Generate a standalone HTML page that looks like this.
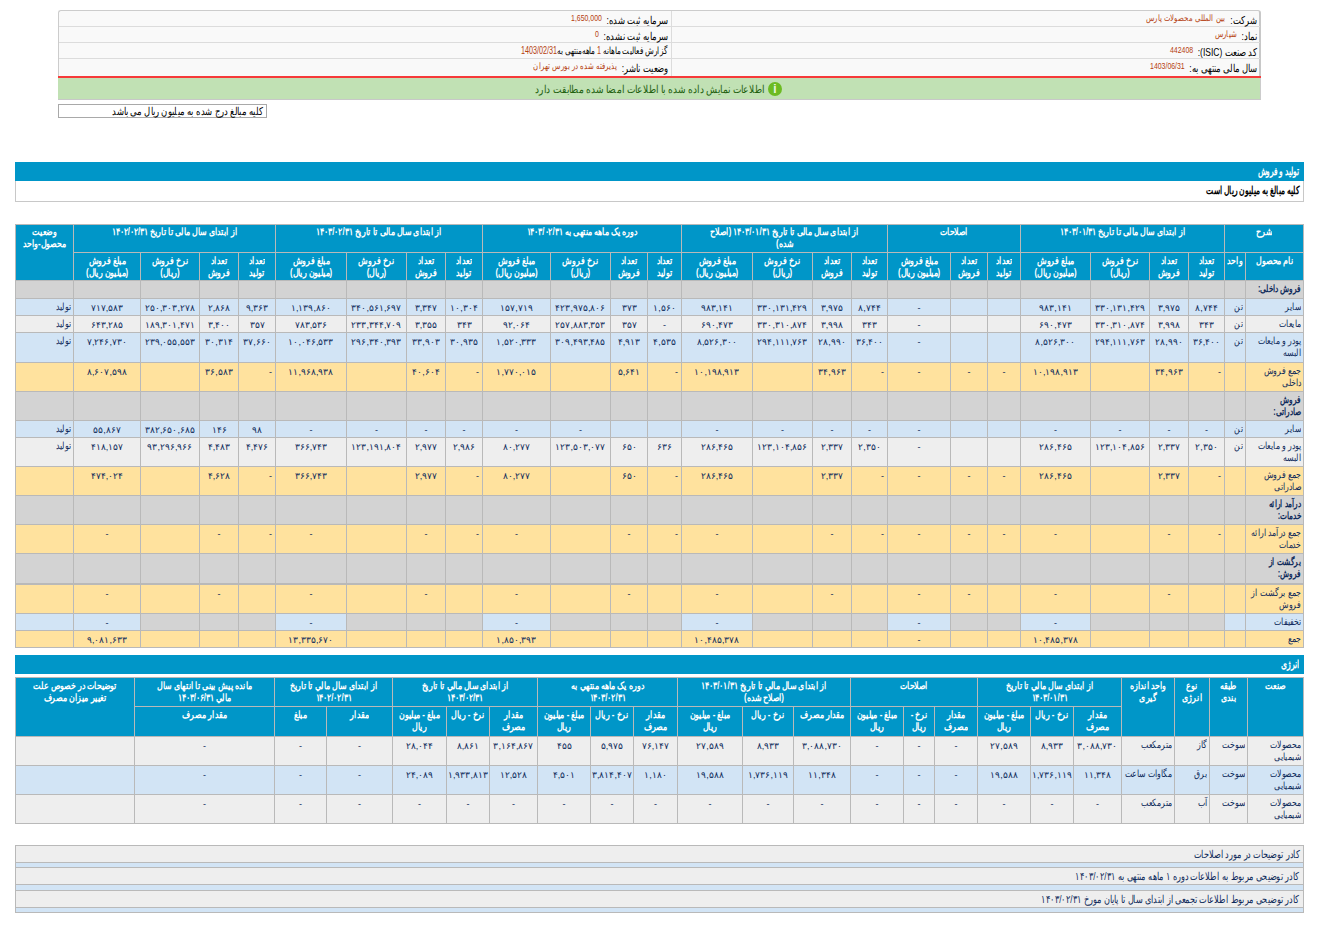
<!DOCTYPE html>
<html lang="fa" dir="ltr"><head><meta charset="utf-8"><title>Codal</title>
<style>
html,body{margin:0;padding:0;background:#fff;width:1324px;height:936px;overflow:hidden}
body{font-family:"Liberation Sans",sans-serif;font-size:11px;color:#000;position:relative}
.c{position:absolute;box-sizing:border-box;border:1px solid #b9b9b9;overflow:hidden}
.t{position:absolute;direction:rtl;white-space:nowrap}
.t span{display:inline-block;white-space:nowrap}
.b{position:absolute;box-sizing:border-box}
.s{display:inline-block;white-space:nowrap}
.sq{display:inline-block;white-space:nowrap;transform:scaleX(.77)}
.inf{position:absolute;direction:rtl;white-space:nowrap;height:15px;line-height:15px;transform:scaleX(.77);transform-origin:100% 50%}
.lab{font-size:11px;color:#000}
.lab2{font-size:10px;color:#000}
.val{font-size:9px;color:#b5400f;margin-right:6px;vertical-align:3px}
.br{font-weight:normal;color:#b5400f}
.dsc{left:15px;width:1289px;background:#eeeeee;border:1px solid #b9b9b9;direction:rtl;text-align:right;white-space:nowrap;padding-right:4px;line-height:16px;font-size:11px;color:#0f2b5b}
</style></head><body>
<!-- header info box -->
<div class="b" style="left:58px;top:10px;width:1203px;height:67px;background:#f9f9f9;border:1px solid #cccccc;border-right:2px solid #c8c8c8;border-bottom:none;border-radius:3px 3px 0 0"></div>
<div class="b" style="left:59px;top:26px;width:1201px;height:1px;background:#dcdcdc"></div>
<div class="b" style="left:59px;top:42px;width:1201px;height:1px;background:#dcdcdc"></div>
<div class="b" style="left:59px;top:58px;width:1201px;height:1px;background:#dcdcdc"></div>
<div class="b" style="left:671px;top:11px;width:1px;height:65px;background:#dcdcdc"></div>
<div class="b" style="left:58px;top:76px;width:1203px;height:2px;background:#f63a3a"></div>
<div class="b" style="left:58px;top:78px;width:1203px;height:22px;background:#c1e1b4;border-bottom:1px solid #c8c8c8;border-right:1px solid #cccccc"></div>
<!-- info texts right column -->
<div class="inf" style="right:67px;top:11px"><span class="lab">شرکت:</span><span class="val">بین المللی محصولات پارس</span></div>
<div class="inf" style="right:67px;top:27px"><span class="lab">نماد:</span><span class="val">شپارس</span></div>
<div class="inf" style="right:67px;top:43px"><span class="lab">کد صنعت (ISIC):</span><span class="val">442408</span></div>
<div class="inf" style="right:67px;top:59px"><span class="lab">سال مالی منتهی به:</span><span class="val">1403/06/31</span></div>
<!-- info texts left column -->
<div class="inf" style="right:656px;top:11px"><span class="lab">سرمایه ثبت شده:</span><span class="val">1,650,000</span></div>
<div class="inf" style="right:656px;top:27px"><span class="lab">سرمایه ثبت نشده:</span><span class="val">0</span></div>
<div class="inf" style="right:656px;top:43px;transform:scaleX(.72)"><span class="lab2">گزارش فعالیت ماهانه <b class="br">1</b> ماهه‌منتهی به<b class="br">1403/02/31</b></span></div>
<div class="inf" style="right:656px;top:59px"><span class="lab">وضعیت ناشر:</span><span class="val">پذیرفته شده در بورس تهران</span></div>
<!-- green message -->
<div class="b" style="left:437px;top:81px;width:328px;height:16px;line-height:16px;color:#22600f;font-size:11px;direction:rtl;text-align:right;white-space:nowrap"><span class="sq" style="transform-origin:100% 50%;transform:scaleX(.82)">اطلاعات نمایش داده شده با اطلاعات امضا شده مطابقت دارد</span></div>
<div class="b" style="left:768px;top:82px;width:14px;height:14px;border-radius:50%;background:#6cbb22;color:#eef8e4;font-weight:bold;font-size:12px;line-height:14px;text-align:center">i</div>
<!-- amounts note input -->
<div class="b" style="left:58px;top:104px;width:209px;height:14px;border:1px solid #a9a9a9;background:#fff;direction:rtl;text-align:right;white-space:nowrap;font-size:11px;line-height:12px;padding-right:4px;color:#000"><span class="sq" style="transform-origin:100% 50%">کلیه مبالغ درج شده به میلیون ریال می باشد</span></div>
<!-- section bar production & sales -->
<div class="b" style="left:15px;top:162px;width:1289px;height:19px;background:#0096c8;color:#fff;font-weight:bold;direction:rtl;text-align:right;white-space:nowrap;padding-right:5px;line-height:19px;font-size:11px"><span class="sq" style="transform-origin:100% 50%;transform:scaleX(.68)">تولید و فروش</span></div>
<div class="b" style="left:15px;top:181px;width:1289px;height:21px;background:#fff;border:1px solid #c8c8c8;border-top:none;color:#000;font-weight:bold;direction:rtl;text-align:right;white-space:nowrap;padding-right:4px;line-height:19px;font-size:11px"><span class="sq" style="transform-origin:100% 50%;transform:scaleX(.69)">کلیه مبالغ به میلیون ریال است</span></div>

<div class="c" style="left:1224px;top:224px;width:80px;height:29px;background:#0096c8;border-color:#b9b9b9"><div class="t" style="left:-300px;right:-300px;text-align:center;transform-origin:50% 0;transform:scaleX(0.79);top:1px;line-height:12px;font-size:10px;font-weight:bold;color:#fff">شرح</div></div>
<div class="c" style="left:1020px;top:224px;width:205px;height:29px;background:#0096c8;border-color:#b9b9b9"><div class="t" style="left:-300px;right:-300px;text-align:center;transform-origin:50% 0;transform:scaleX(0.79);top:1px;line-height:12px;font-size:10px;font-weight:bold;color:#fff">از ابتدای سال مالی تا تاریخ ۱۴۰۳/۰۱/۳۱</div></div>
<div class="c" style="left:887px;top:224px;width:134px;height:29px;background:#0096c8;border-color:#b9b9b9"><div class="t" style="left:-300px;right:-300px;text-align:center;transform-origin:50% 0;transform:scaleX(0.79);top:1px;line-height:12px;font-size:10px;font-weight:bold;color:#fff">اصلاحات</div></div>
<div class="c" style="left:681px;top:224px;width:207px;height:29px;background:#0096c8;border-color:#b9b9b9"><div class="t" style="left:-300px;right:-300px;text-align:center;transform-origin:50% 0;transform:scaleX(0.79);top:1px;line-height:12px;font-size:10px;font-weight:bold;color:#fff">از ابتدای سال مالی تا تاریخ ۱۴۰۳/۰۱/۳۱ (اصلاح<br>شده)</div></div>
<div class="c" style="left:482px;top:224px;width:200px;height:29px;background:#0096c8;border-color:#b9b9b9"><div class="t" style="left:-300px;right:-300px;text-align:center;transform-origin:50% 0;transform:scaleX(0.79);top:1px;line-height:12px;font-size:10px;font-weight:bold;color:#fff">دوره یک ماهه منتهی به ۱۴۰۳/۰۲/۳۱</div></div>
<div class="c" style="left:275px;top:224px;width:208px;height:29px;background:#0096c8;border-color:#b9b9b9"><div class="t" style="left:-300px;right:-300px;text-align:center;transform-origin:50% 0;transform:scaleX(0.79);top:1px;line-height:12px;font-size:10px;font-weight:bold;color:#fff">از ابتدای سال مالی تا تاریخ ۱۴۰۳/۰۲/۳۱</div></div>
<div class="c" style="left:73px;top:224px;width:203px;height:29px;background:#0096c8;border-color:#b9b9b9"><div class="t" style="left:-300px;right:-300px;text-align:center;transform-origin:50% 0;transform:scaleX(0.79);top:1px;line-height:12px;font-size:10px;font-weight:bold;color:#fff">از ابتدای سال مالی تا تاریخ ۱۴۰۲/۰۲/۳۱</div></div>
<div class="c" style="left:15px;top:224px;width:59px;height:57px;background:#0096c8;border-color:#b9b9b9"><div class="t" style="left:-300px;right:-300px;text-align:center;transform-origin:50% 0;transform:scaleX(0.79);top:1px;line-height:12px;font-size:10px;font-weight:bold;color:#fff">وضعیت<br>محصول-واحد</div></div>
<div class="c" style="left:1245px;top:252px;width:59px;height:29px;background:#0096c8;border-color:#b9b9b9"><div class="t" style="left:-300px;right:-300px;text-align:center;transform-origin:50% 0;transform:scaleX(0.79);top:2px;line-height:12px;font-size:10px;font-weight:bold;color:#fff">نام محصول</div></div>
<div class="c" style="left:1224px;top:252px;width:22px;height:29px;background:#0096c8;border-color:#b9b9b9"><div class="t" style="left:-300px;right:-300px;text-align:center;transform-origin:50% 0;transform:scaleX(0.79);top:2px;line-height:12px;font-size:10px;font-weight:bold;color:#fff">واحد</div></div>
<div class="c" style="left:1188px;top:252px;width:37px;height:29px;background:#0096c8;border-color:#b9b9b9"><div class="t" style="left:-300px;right:-300px;text-align:center;transform-origin:50% 0;transform:scaleX(0.79);top:2px;line-height:12px;font-size:10px;font-weight:bold;color:#fff">تعداد<br>تولید</div></div>
<div class="c" style="left:1149px;top:252px;width:40px;height:29px;background:#0096c8;border-color:#b9b9b9"><div class="t" style="left:-300px;right:-300px;text-align:center;transform-origin:50% 0;transform:scaleX(0.79);top:2px;line-height:12px;font-size:10px;font-weight:bold;color:#fff">تعداد<br>فروش</div></div>
<div class="c" style="left:1090px;top:252px;width:60px;height:29px;background:#0096c8;border-color:#b9b9b9"><div class="t" style="left:-300px;right:-300px;text-align:center;transform-origin:50% 0;transform:scaleX(0.79);top:2px;line-height:12px;font-size:10px;font-weight:bold;color:#fff">نرخ فروش<br>(ريال)</div></div>
<div class="c" style="left:1020px;top:252px;width:71px;height:29px;background:#0096c8;border-color:#b9b9b9"><div class="t" style="left:-300px;right:-300px;text-align:center;transform-origin:50% 0;transform:scaleX(0.79);top:2px;line-height:12px;font-size:10px;font-weight:bold;color:#fff">مبلغ فروش<br>(میلیون ريال)</div></div>
<div class="c" style="left:987px;top:252px;width:34px;height:29px;background:#0096c8;border-color:#b9b9b9"><div class="t" style="left:-300px;right:-300px;text-align:center;transform-origin:50% 0;transform:scaleX(0.79);top:2px;line-height:12px;font-size:10px;font-weight:bold;color:#fff">تعداد<br>تولید</div></div>
<div class="c" style="left:950px;top:252px;width:38px;height:29px;background:#0096c8;border-color:#b9b9b9"><div class="t" style="left:-300px;right:-300px;text-align:center;transform-origin:50% 0;transform:scaleX(0.79);top:2px;line-height:12px;font-size:10px;font-weight:bold;color:#fff">تعداد<br>فروش</div></div>
<div class="c" style="left:887px;top:252px;width:64px;height:29px;background:#0096c8;border-color:#b9b9b9"><div class="t" style="left:-300px;right:-300px;text-align:center;transform-origin:50% 0;transform:scaleX(0.79);top:2px;line-height:12px;font-size:10px;font-weight:bold;color:#fff">مبلغ فروش<br>(میلیون ريال)</div></div>
<div class="c" style="left:851px;top:252px;width:37px;height:29px;background:#0096c8;border-color:#b9b9b9"><div class="t" style="left:-300px;right:-300px;text-align:center;transform-origin:50% 0;transform:scaleX(0.79);top:2px;line-height:12px;font-size:10px;font-weight:bold;color:#fff">تعداد<br>تولید</div></div>
<div class="c" style="left:812px;top:252px;width:40px;height:29px;background:#0096c8;border-color:#b9b9b9"><div class="t" style="left:-300px;right:-300px;text-align:center;transform-origin:50% 0;transform:scaleX(0.79);top:2px;line-height:12px;font-size:10px;font-weight:bold;color:#fff">تعداد<br>فروش</div></div>
<div class="c" style="left:752px;top:252px;width:61px;height:29px;background:#0096c8;border-color:#b9b9b9"><div class="t" style="left:-300px;right:-300px;text-align:center;transform-origin:50% 0;transform:scaleX(0.79);top:2px;line-height:12px;font-size:10px;font-weight:bold;color:#fff">نرخ فروش<br>(ريال)</div></div>
<div class="c" style="left:681px;top:252px;width:72px;height:29px;background:#0096c8;border-color:#b9b9b9"><div class="t" style="left:-300px;right:-300px;text-align:center;transform-origin:50% 0;transform:scaleX(0.79);top:2px;line-height:12px;font-size:10px;font-weight:bold;color:#fff">مبلغ فروش<br>(میلیون ريال)</div></div>
<div class="c" style="left:647px;top:252px;width:35px;height:29px;background:#0096c8;border-color:#b9b9b9"><div class="t" style="left:-300px;right:-300px;text-align:center;transform-origin:50% 0;transform:scaleX(0.79);top:2px;line-height:12px;font-size:10px;font-weight:bold;color:#fff">تعداد<br>تولید</div></div>
<div class="c" style="left:610px;top:252px;width:38px;height:29px;background:#0096c8;border-color:#b9b9b9"><div class="t" style="left:-300px;right:-300px;text-align:center;transform-origin:50% 0;transform:scaleX(0.79);top:2px;line-height:12px;font-size:10px;font-weight:bold;color:#fff">تعداد<br>فروش</div></div>
<div class="c" style="left:550px;top:252px;width:61px;height:29px;background:#0096c8;border-color:#b9b9b9"><div class="t" style="left:-300px;right:-300px;text-align:center;transform-origin:50% 0;transform:scaleX(0.79);top:2px;line-height:12px;font-size:10px;font-weight:bold;color:#fff">نرخ فروش<br>(ريال)</div></div>
<div class="c" style="left:482px;top:252px;width:69px;height:29px;background:#0096c8;border-color:#b9b9b9"><div class="t" style="left:-300px;right:-300px;text-align:center;transform-origin:50% 0;transform:scaleX(0.79);top:2px;line-height:12px;font-size:10px;font-weight:bold;color:#fff">مبلغ فروش<br>(میلیون ريال)</div></div>
<div class="c" style="left:445px;top:252px;width:38px;height:29px;background:#0096c8;border-color:#b9b9b9"><div class="t" style="left:-300px;right:-300px;text-align:center;transform-origin:50% 0;transform:scaleX(0.79);top:2px;line-height:12px;font-size:10px;font-weight:bold;color:#fff">تعداد<br>تولید</div></div>
<div class="c" style="left:406px;top:252px;width:40px;height:29px;background:#0096c8;border-color:#b9b9b9"><div class="t" style="left:-300px;right:-300px;text-align:center;transform-origin:50% 0;transform:scaleX(0.79);top:2px;line-height:12px;font-size:10px;font-weight:bold;color:#fff">تعداد<br>فروش</div></div>
<div class="c" style="left:346px;top:252px;width:61px;height:29px;background:#0096c8;border-color:#b9b9b9"><div class="t" style="left:-300px;right:-300px;text-align:center;transform-origin:50% 0;transform:scaleX(0.79);top:2px;line-height:12px;font-size:10px;font-weight:bold;color:#fff">نرخ فروش<br>(ريال)</div></div>
<div class="c" style="left:275px;top:252px;width:72px;height:29px;background:#0096c8;border-color:#b9b9b9"><div class="t" style="left:-300px;right:-300px;text-align:center;transform-origin:50% 0;transform:scaleX(0.79);top:2px;line-height:12px;font-size:10px;font-weight:bold;color:#fff">مبلغ فروش<br>(میلیون ريال)</div></div>
<div class="c" style="left:238px;top:252px;width:38px;height:29px;background:#0096c8;border-color:#b9b9b9"><div class="t" style="left:-300px;right:-300px;text-align:center;transform-origin:50% 0;transform:scaleX(0.79);top:2px;line-height:12px;font-size:10px;font-weight:bold;color:#fff">تعداد<br>تولید</div></div>
<div class="c" style="left:199px;top:252px;width:40px;height:29px;background:#0096c8;border-color:#b9b9b9"><div class="t" style="left:-300px;right:-300px;text-align:center;transform-origin:50% 0;transform:scaleX(0.79);top:2px;line-height:12px;font-size:10px;font-weight:bold;color:#fff">تعداد<br>فروش</div></div>
<div class="c" style="left:140px;top:252px;width:60px;height:29px;background:#0096c8;border-color:#b9b9b9"><div class="t" style="left:-300px;right:-300px;text-align:center;transform-origin:50% 0;transform:scaleX(0.79);top:2px;line-height:12px;font-size:10px;font-weight:bold;color:#fff">نرخ فروش<br>(ريال)</div></div>
<div class="c" style="left:73px;top:252px;width:68px;height:29px;background:#0096c8;border-color:#b9b9b9"><div class="t" style="left:-300px;right:-300px;text-align:center;transform-origin:50% 0;transform:scaleX(0.79);top:2px;line-height:12px;font-size:10px;font-weight:bold;color:#fff">مبلغ فروش<br>(میلیون ريال)</div></div>
<div class="c" style="left:1245px;top:280px;width:59px;height:19px;background:#d3d3d3;border-color:#b9b9b9"><div class="t" style="left:-600px;right:2px;text-align:right;transform-origin:100% 0;transform:scaleX(0.74);top:2px;line-height:12px;font-size:10px;font-weight:bold;color:#0f2b5b">فروش داخلی:</div></div>
<div class="c" style="left:1224px;top:280px;width:22px;height:19px;background:#d3d3d3;border-color:#b9b9b9"></div>
<div class="c" style="left:1188px;top:280px;width:37px;height:19px;background:#d3d3d3;border-color:#b9b9b9"></div>
<div class="c" style="left:1149px;top:280px;width:40px;height:19px;background:#d3d3d3;border-color:#b9b9b9"></div>
<div class="c" style="left:1090px;top:280px;width:60px;height:19px;background:#d3d3d3;border-color:#b9b9b9"></div>
<div class="c" style="left:1020px;top:280px;width:71px;height:19px;background:#d3d3d3;border-color:#b9b9b9"></div>
<div class="c" style="left:987px;top:280px;width:34px;height:19px;background:#d3d3d3;border-color:#b9b9b9"></div>
<div class="c" style="left:950px;top:280px;width:38px;height:19px;background:#d3d3d3;border-color:#b9b9b9"></div>
<div class="c" style="left:887px;top:280px;width:64px;height:19px;background:#d3d3d3;border-color:#b9b9b9"></div>
<div class="c" style="left:851px;top:280px;width:37px;height:19px;background:#d3d3d3;border-color:#b9b9b9"></div>
<div class="c" style="left:812px;top:280px;width:40px;height:19px;background:#d3d3d3;border-color:#b9b9b9"></div>
<div class="c" style="left:752px;top:280px;width:61px;height:19px;background:#d3d3d3;border-color:#b9b9b9"></div>
<div class="c" style="left:681px;top:280px;width:72px;height:19px;background:#d3d3d3;border-color:#b9b9b9"></div>
<div class="c" style="left:647px;top:280px;width:35px;height:19px;background:#d3d3d3;border-color:#b9b9b9"></div>
<div class="c" style="left:610px;top:280px;width:38px;height:19px;background:#d3d3d3;border-color:#b9b9b9"></div>
<div class="c" style="left:550px;top:280px;width:61px;height:19px;background:#d3d3d3;border-color:#b9b9b9"></div>
<div class="c" style="left:482px;top:280px;width:69px;height:19px;background:#d3d3d3;border-color:#b9b9b9"></div>
<div class="c" style="left:445px;top:280px;width:38px;height:19px;background:#d3d3d3;border-color:#b9b9b9"></div>
<div class="c" style="left:406px;top:280px;width:40px;height:19px;background:#d3d3d3;border-color:#b9b9b9"></div>
<div class="c" style="left:346px;top:280px;width:61px;height:19px;background:#d3d3d3;border-color:#b9b9b9"></div>
<div class="c" style="left:275px;top:280px;width:72px;height:19px;background:#d3d3d3;border-color:#b9b9b9"></div>
<div class="c" style="left:238px;top:280px;width:38px;height:19px;background:#d3d3d3;border-color:#b9b9b9"></div>
<div class="c" style="left:199px;top:280px;width:40px;height:19px;background:#d3d3d3;border-color:#b9b9b9"></div>
<div class="c" style="left:140px;top:280px;width:60px;height:19px;background:#d3d3d3;border-color:#b9b9b9"></div>
<div class="c" style="left:73px;top:280px;width:68px;height:19px;background:#d3d3d3;border-color:#b9b9b9"></div>
<div class="c" style="left:15px;top:280px;width:59px;height:19px;background:#d3d3d3;border-color:#b9b9b9"></div>
<div class="c" style="left:1245px;top:298px;width:59px;height:18px;background:#d2e4f5;border-color:#b9b9b9"><div class="t" style="left:-600px;right:2px;text-align:right;transform-origin:100% 0;transform:scaleX(0.78);top:2px;line-height:12px;font-size:10px;color:#0f2b5b">سایر</div></div>
<div class="c" style="left:1224px;top:298px;width:22px;height:18px;background:#d2e4f5;border-color:#b9b9b9"><div class="t" style="left:-600px;right:2px;text-align:right;transform-origin:100% 0;transform:scaleX(0.78);top:2px;line-height:12px;font-size:10px;color:#0f2b5b">تن</div></div>
<div class="c" style="left:1188px;top:298px;width:37px;height:18px;background:#d2e4f5;border-color:#b9b9b9"><div class="t" style="left:-300px;right:-300px;text-align:center;transform-origin:50% 0;transform:scaleX(1.0);top:2.5px;line-height:12px;font-size:9px;color:#0f2b5b">۸,۷۴۴</div></div>
<div class="c" style="left:1149px;top:298px;width:40px;height:18px;background:#d2e4f5;border-color:#b9b9b9"><div class="t" style="left:-300px;right:-300px;text-align:center;transform-origin:50% 0;transform:scaleX(1.0);top:2.5px;line-height:12px;font-size:9px;color:#0f2b5b">۳,۹۷۵</div></div>
<div class="c" style="left:1090px;top:298px;width:60px;height:18px;background:#d2e4f5;border-color:#b9b9b9"><div class="t" style="left:-300px;right:-300px;text-align:center;transform-origin:50% 0;transform:scaleX(1.0);top:2.5px;line-height:12px;font-size:9px;color:#0f2b5b">۳۳۰,۱۳۱,۴۲۹</div></div>
<div class="c" style="left:1020px;top:298px;width:71px;height:18px;background:#d2e4f5;border-color:#b9b9b9"><div class="t" style="left:-300px;right:-300px;text-align:center;transform-origin:50% 0;transform:scaleX(1.0);top:2.5px;line-height:12px;font-size:9px;color:#0f2b5b">۹۸۳,۱۴۱</div></div>
<div class="c" style="left:987px;top:298px;width:34px;height:18px;background:#d2e4f5;border-color:#b9b9b9"></div>
<div class="c" style="left:950px;top:298px;width:38px;height:18px;background:#d2e4f5;border-color:#b9b9b9"></div>
<div class="c" style="left:887px;top:298px;width:64px;height:18px;background:#d2e4f5;border-color:#b9b9b9"><div class="t" style="left:-300px;right:-300px;text-align:center;transform-origin:50% 0;transform:scaleX(1.0);top:2.5px;line-height:12px;font-size:9px;color:#0f2b5b">-</div></div>
<div class="c" style="left:851px;top:298px;width:37px;height:18px;background:#d2e4f5;border-color:#b9b9b9"><div class="t" style="left:-300px;right:-300px;text-align:center;transform-origin:50% 0;transform:scaleX(1.0);top:2.5px;line-height:12px;font-size:9px;color:#0f2b5b">۸,۷۴۴</div></div>
<div class="c" style="left:812px;top:298px;width:40px;height:18px;background:#d2e4f5;border-color:#b9b9b9"><div class="t" style="left:-300px;right:-300px;text-align:center;transform-origin:50% 0;transform:scaleX(1.0);top:2.5px;line-height:12px;font-size:9px;color:#0f2b5b">۳,۹۷۵</div></div>
<div class="c" style="left:752px;top:298px;width:61px;height:18px;background:#d2e4f5;border-color:#b9b9b9"><div class="t" style="left:-300px;right:-300px;text-align:center;transform-origin:50% 0;transform:scaleX(1.0);top:2.5px;line-height:12px;font-size:9px;color:#0f2b5b">۳۳۰,۱۳۱,۴۲۹</div></div>
<div class="c" style="left:681px;top:298px;width:72px;height:18px;background:#d2e4f5;border-color:#b9b9b9"><div class="t" style="left:-300px;right:-300px;text-align:center;transform-origin:50% 0;transform:scaleX(1.0);top:2.5px;line-height:12px;font-size:9px;color:#0f2b5b">۹۸۳,۱۴۱</div></div>
<div class="c" style="left:647px;top:298px;width:35px;height:18px;background:#d2e4f5;border-color:#b9b9b9"><div class="t" style="left:-300px;right:-300px;text-align:center;transform-origin:50% 0;transform:scaleX(1.0);top:2.5px;line-height:12px;font-size:9px;color:#0f2b5b">۱,۵۶۰</div></div>
<div class="c" style="left:610px;top:298px;width:38px;height:18px;background:#d2e4f5;border-color:#b9b9b9"><div class="t" style="left:-300px;right:-300px;text-align:center;transform-origin:50% 0;transform:scaleX(1.0);top:2.5px;line-height:12px;font-size:9px;color:#0f2b5b">۳۷۳</div></div>
<div class="c" style="left:550px;top:298px;width:61px;height:18px;background:#d2e4f5;border-color:#b9b9b9"><div class="t" style="left:-300px;right:-300px;text-align:center;transform-origin:50% 0;transform:scaleX(1.0);top:2.5px;line-height:12px;font-size:9px;color:#0f2b5b">۴۲۳,۹۷۵,۸۰۶</div></div>
<div class="c" style="left:482px;top:298px;width:69px;height:18px;background:#d2e4f5;border-color:#b9b9b9"><div class="t" style="left:-300px;right:-300px;text-align:center;transform-origin:50% 0;transform:scaleX(1.0);top:2.5px;line-height:12px;font-size:9px;color:#0f2b5b">۱۵۷,۷۱۹</div></div>
<div class="c" style="left:445px;top:298px;width:38px;height:18px;background:#d2e4f5;border-color:#b9b9b9"><div class="t" style="left:-300px;right:-300px;text-align:center;transform-origin:50% 0;transform:scaleX(1.0);top:2.5px;line-height:12px;font-size:9px;color:#0f2b5b">۱۰,۳۰۴</div></div>
<div class="c" style="left:406px;top:298px;width:40px;height:18px;background:#d2e4f5;border-color:#b9b9b9"><div class="t" style="left:-300px;right:-300px;text-align:center;transform-origin:50% 0;transform:scaleX(1.0);top:2.5px;line-height:12px;font-size:9px;color:#0f2b5b">۳,۳۴۷</div></div>
<div class="c" style="left:346px;top:298px;width:61px;height:18px;background:#d2e4f5;border-color:#b9b9b9"><div class="t" style="left:-300px;right:-300px;text-align:center;transform-origin:50% 0;transform:scaleX(1.0);top:2.5px;line-height:12px;font-size:9px;color:#0f2b5b">۳۴۰,۵۶۱,۶۹۷</div></div>
<div class="c" style="left:275px;top:298px;width:72px;height:18px;background:#d2e4f5;border-color:#b9b9b9"><div class="t" style="left:-300px;right:-300px;text-align:center;transform-origin:50% 0;transform:scaleX(1.0);top:2.5px;line-height:12px;font-size:9px;color:#0f2b5b">۱,۱۳۹,۸۶۰</div></div>
<div class="c" style="left:238px;top:298px;width:38px;height:18px;background:#d2e4f5;border-color:#b9b9b9"><div class="t" style="left:-300px;right:-300px;text-align:center;transform-origin:50% 0;transform:scaleX(1.0);top:2.5px;line-height:12px;font-size:9px;color:#0f2b5b">۹,۳۶۳</div></div>
<div class="c" style="left:199px;top:298px;width:40px;height:18px;background:#d2e4f5;border-color:#b9b9b9"><div class="t" style="left:-300px;right:-300px;text-align:center;transform-origin:50% 0;transform:scaleX(1.0);top:2.5px;line-height:12px;font-size:9px;color:#0f2b5b">۲,۸۶۸</div></div>
<div class="c" style="left:140px;top:298px;width:60px;height:18px;background:#d2e4f5;border-color:#b9b9b9"><div class="t" style="left:-300px;right:-300px;text-align:center;transform-origin:50% 0;transform:scaleX(1.0);top:2.5px;line-height:12px;font-size:9px;color:#0f2b5b">۲۵۰,۳۰۳,۲۷۸</div></div>
<div class="c" style="left:73px;top:298px;width:68px;height:18px;background:#d2e4f5;border-color:#b9b9b9"><div class="t" style="left:-300px;right:-300px;text-align:center;transform-origin:50% 0;transform:scaleX(1.0);top:2.5px;line-height:12px;font-size:9px;color:#0f2b5b">۷۱۷,۵۸۳</div></div>
<div class="c" style="left:15px;top:298px;width:59px;height:18px;background:#d2e4f5;border-color:#b9b9b9"><div class="t" style="left:-600px;right:2px;text-align:right;transform-origin:100% 0;transform:scaleX(0.78);top:2px;line-height:12px;font-size:10px;color:#0f2b5b">تولید</div></div>
<div class="c" style="left:1245px;top:315px;width:59px;height:18px;background:#eeeeee;border-color:#b9b9b9"><div class="t" style="left:-600px;right:2px;text-align:right;transform-origin:100% 0;transform:scaleX(0.78);top:2px;line-height:12px;font-size:10px;color:#0f2b5b">مایعات</div></div>
<div class="c" style="left:1224px;top:315px;width:22px;height:18px;background:#eeeeee;border-color:#b9b9b9"><div class="t" style="left:-600px;right:2px;text-align:right;transform-origin:100% 0;transform:scaleX(0.78);top:2px;line-height:12px;font-size:10px;color:#0f2b5b">تن</div></div>
<div class="c" style="left:1188px;top:315px;width:37px;height:18px;background:#eeeeee;border-color:#b9b9b9"><div class="t" style="left:-300px;right:-300px;text-align:center;transform-origin:50% 0;transform:scaleX(1.0);top:2.5px;line-height:12px;font-size:9px;color:#0f2b5b">۳۴۳</div></div>
<div class="c" style="left:1149px;top:315px;width:40px;height:18px;background:#eeeeee;border-color:#b9b9b9"><div class="t" style="left:-300px;right:-300px;text-align:center;transform-origin:50% 0;transform:scaleX(1.0);top:2.5px;line-height:12px;font-size:9px;color:#0f2b5b">۳,۹۹۸</div></div>
<div class="c" style="left:1090px;top:315px;width:60px;height:18px;background:#eeeeee;border-color:#b9b9b9"><div class="t" style="left:-300px;right:-300px;text-align:center;transform-origin:50% 0;transform:scaleX(1.0);top:2.5px;line-height:12px;font-size:9px;color:#0f2b5b">۳۳۰,۳۱۰,۸۷۴</div></div>
<div class="c" style="left:1020px;top:315px;width:71px;height:18px;background:#eeeeee;border-color:#b9b9b9"><div class="t" style="left:-300px;right:-300px;text-align:center;transform-origin:50% 0;transform:scaleX(1.0);top:2.5px;line-height:12px;font-size:9px;color:#0f2b5b">۶۹۰,۴۷۳</div></div>
<div class="c" style="left:987px;top:315px;width:34px;height:18px;background:#eeeeee;border-color:#b9b9b9"></div>
<div class="c" style="left:950px;top:315px;width:38px;height:18px;background:#eeeeee;border-color:#b9b9b9"></div>
<div class="c" style="left:887px;top:315px;width:64px;height:18px;background:#eeeeee;border-color:#b9b9b9"><div class="t" style="left:-300px;right:-300px;text-align:center;transform-origin:50% 0;transform:scaleX(1.0);top:2.5px;line-height:12px;font-size:9px;color:#0f2b5b">-</div></div>
<div class="c" style="left:851px;top:315px;width:37px;height:18px;background:#eeeeee;border-color:#b9b9b9"><div class="t" style="left:-300px;right:-300px;text-align:center;transform-origin:50% 0;transform:scaleX(1.0);top:2.5px;line-height:12px;font-size:9px;color:#0f2b5b">۳۴۳</div></div>
<div class="c" style="left:812px;top:315px;width:40px;height:18px;background:#eeeeee;border-color:#b9b9b9"><div class="t" style="left:-300px;right:-300px;text-align:center;transform-origin:50% 0;transform:scaleX(1.0);top:2.5px;line-height:12px;font-size:9px;color:#0f2b5b">۳,۹۹۸</div></div>
<div class="c" style="left:752px;top:315px;width:61px;height:18px;background:#eeeeee;border-color:#b9b9b9"><div class="t" style="left:-300px;right:-300px;text-align:center;transform-origin:50% 0;transform:scaleX(1.0);top:2.5px;line-height:12px;font-size:9px;color:#0f2b5b">۳۳۰,۳۱۰,۸۷۴</div></div>
<div class="c" style="left:681px;top:315px;width:72px;height:18px;background:#eeeeee;border-color:#b9b9b9"><div class="t" style="left:-300px;right:-300px;text-align:center;transform-origin:50% 0;transform:scaleX(1.0);top:2.5px;line-height:12px;font-size:9px;color:#0f2b5b">۶۹۰,۴۷۳</div></div>
<div class="c" style="left:647px;top:315px;width:35px;height:18px;background:#eeeeee;border-color:#b9b9b9"><div class="t" style="left:-300px;right:-300px;text-align:center;transform-origin:50% 0;transform:scaleX(1.0);top:2.5px;line-height:12px;font-size:9px;color:#0f2b5b">-</div></div>
<div class="c" style="left:610px;top:315px;width:38px;height:18px;background:#eeeeee;border-color:#b9b9b9"><div class="t" style="left:-300px;right:-300px;text-align:center;transform-origin:50% 0;transform:scaleX(1.0);top:2.5px;line-height:12px;font-size:9px;color:#0f2b5b">۳۵۷</div></div>
<div class="c" style="left:550px;top:315px;width:61px;height:18px;background:#eeeeee;border-color:#b9b9b9"><div class="t" style="left:-300px;right:-300px;text-align:center;transform-origin:50% 0;transform:scaleX(1.0);top:2.5px;line-height:12px;font-size:9px;color:#0f2b5b">۲۵۷,۸۸۳,۳۵۳</div></div>
<div class="c" style="left:482px;top:315px;width:69px;height:18px;background:#eeeeee;border-color:#b9b9b9"><div class="t" style="left:-300px;right:-300px;text-align:center;transform-origin:50% 0;transform:scaleX(1.0);top:2.5px;line-height:12px;font-size:9px;color:#0f2b5b">۹۲,۰۶۴</div></div>
<div class="c" style="left:445px;top:315px;width:38px;height:18px;background:#eeeeee;border-color:#b9b9b9"><div class="t" style="left:-300px;right:-300px;text-align:center;transform-origin:50% 0;transform:scaleX(1.0);top:2.5px;line-height:12px;font-size:9px;color:#0f2b5b">۳۴۳</div></div>
<div class="c" style="left:406px;top:315px;width:40px;height:18px;background:#eeeeee;border-color:#b9b9b9"><div class="t" style="left:-300px;right:-300px;text-align:center;transform-origin:50% 0;transform:scaleX(1.0);top:2.5px;line-height:12px;font-size:9px;color:#0f2b5b">۳,۳۵۵</div></div>
<div class="c" style="left:346px;top:315px;width:61px;height:18px;background:#eeeeee;border-color:#b9b9b9"><div class="t" style="left:-300px;right:-300px;text-align:center;transform-origin:50% 0;transform:scaleX(1.0);top:2.5px;line-height:12px;font-size:9px;color:#0f2b5b">۲۳۳,۳۴۴,۷۰۹</div></div>
<div class="c" style="left:275px;top:315px;width:72px;height:18px;background:#eeeeee;border-color:#b9b9b9"><div class="t" style="left:-300px;right:-300px;text-align:center;transform-origin:50% 0;transform:scaleX(1.0);top:2.5px;line-height:12px;font-size:9px;color:#0f2b5b">۷۸۳,۵۳۶</div></div>
<div class="c" style="left:238px;top:315px;width:38px;height:18px;background:#eeeeee;border-color:#b9b9b9"><div class="t" style="left:-300px;right:-300px;text-align:center;transform-origin:50% 0;transform:scaleX(1.0);top:2.5px;line-height:12px;font-size:9px;color:#0f2b5b">۳۵۷</div></div>
<div class="c" style="left:199px;top:315px;width:40px;height:18px;background:#eeeeee;border-color:#b9b9b9"><div class="t" style="left:-300px;right:-300px;text-align:center;transform-origin:50% 0;transform:scaleX(1.0);top:2.5px;line-height:12px;font-size:9px;color:#0f2b5b">۳,۴۰۰</div></div>
<div class="c" style="left:140px;top:315px;width:60px;height:18px;background:#eeeeee;border-color:#b9b9b9"><div class="t" style="left:-300px;right:-300px;text-align:center;transform-origin:50% 0;transform:scaleX(1.0);top:2.5px;line-height:12px;font-size:9px;color:#0f2b5b">۱۸۹,۳۰۱,۴۷۱</div></div>
<div class="c" style="left:73px;top:315px;width:68px;height:18px;background:#eeeeee;border-color:#b9b9b9"><div class="t" style="left:-300px;right:-300px;text-align:center;transform-origin:50% 0;transform:scaleX(1.0);top:2.5px;line-height:12px;font-size:9px;color:#0f2b5b">۶۴۳,۲۸۵</div></div>
<div class="c" style="left:15px;top:315px;width:59px;height:18px;background:#eeeeee;border-color:#b9b9b9"><div class="t" style="left:-600px;right:2px;text-align:right;transform-origin:100% 0;transform:scaleX(0.78);top:2px;line-height:12px;font-size:10px;color:#0f2b5b">تولید</div></div>
<div class="c" style="left:1245px;top:332px;width:59px;height:31px;background:#d2e4f5;border-color:#b9b9b9"><div class="t" style="left:-600px;right:2px;text-align:right;transform-origin:100% 0;transform:scaleX(0.78);top:2px;line-height:12px;font-size:10px;color:#0f2b5b">پودر و مایعات<br>البسه</div></div>
<div class="c" style="left:1224px;top:332px;width:22px;height:31px;background:#d2e4f5;border-color:#b9b9b9"><div class="t" style="left:-600px;right:2px;text-align:right;transform-origin:100% 0;transform:scaleX(0.78);top:2px;line-height:12px;font-size:10px;color:#0f2b5b">تن</div></div>
<div class="c" style="left:1188px;top:332px;width:37px;height:31px;background:#d2e4f5;border-color:#b9b9b9"><div class="t" style="left:-300px;right:-300px;text-align:center;transform-origin:50% 0;transform:scaleX(1.0);top:2.5px;line-height:12px;font-size:9px;color:#0f2b5b">۳۶,۴۰۰</div></div>
<div class="c" style="left:1149px;top:332px;width:40px;height:31px;background:#d2e4f5;border-color:#b9b9b9"><div class="t" style="left:-300px;right:-300px;text-align:center;transform-origin:50% 0;transform:scaleX(1.0);top:2.5px;line-height:12px;font-size:9px;color:#0f2b5b">۲۸,۹۹۰</div></div>
<div class="c" style="left:1090px;top:332px;width:60px;height:31px;background:#d2e4f5;border-color:#b9b9b9"><div class="t" style="left:-300px;right:-300px;text-align:center;transform-origin:50% 0;transform:scaleX(1.0);top:2.5px;line-height:12px;font-size:9px;color:#0f2b5b">۲۹۴,۱۱۱,۷۶۳</div></div>
<div class="c" style="left:1020px;top:332px;width:71px;height:31px;background:#d2e4f5;border-color:#b9b9b9"><div class="t" style="left:-300px;right:-300px;text-align:center;transform-origin:50% 0;transform:scaleX(1.0);top:2.5px;line-height:12px;font-size:9px;color:#0f2b5b">۸,۵۲۶,۳۰۰</div></div>
<div class="c" style="left:987px;top:332px;width:34px;height:31px;background:#d2e4f5;border-color:#b9b9b9"></div>
<div class="c" style="left:950px;top:332px;width:38px;height:31px;background:#d2e4f5;border-color:#b9b9b9"></div>
<div class="c" style="left:887px;top:332px;width:64px;height:31px;background:#d2e4f5;border-color:#b9b9b9"><div class="t" style="left:-300px;right:-300px;text-align:center;transform-origin:50% 0;transform:scaleX(1.0);top:2.5px;line-height:12px;font-size:9px;color:#0f2b5b">-</div></div>
<div class="c" style="left:851px;top:332px;width:37px;height:31px;background:#d2e4f5;border-color:#b9b9b9"><div class="t" style="left:-300px;right:-300px;text-align:center;transform-origin:50% 0;transform:scaleX(1.0);top:2.5px;line-height:12px;font-size:9px;color:#0f2b5b">۳۶,۴۰۰</div></div>
<div class="c" style="left:812px;top:332px;width:40px;height:31px;background:#d2e4f5;border-color:#b9b9b9"><div class="t" style="left:-300px;right:-300px;text-align:center;transform-origin:50% 0;transform:scaleX(1.0);top:2.5px;line-height:12px;font-size:9px;color:#0f2b5b">۲۸,۹۹۰</div></div>
<div class="c" style="left:752px;top:332px;width:61px;height:31px;background:#d2e4f5;border-color:#b9b9b9"><div class="t" style="left:-300px;right:-300px;text-align:center;transform-origin:50% 0;transform:scaleX(1.0);top:2.5px;line-height:12px;font-size:9px;color:#0f2b5b">۲۹۴,۱۱۱,۷۶۳</div></div>
<div class="c" style="left:681px;top:332px;width:72px;height:31px;background:#d2e4f5;border-color:#b9b9b9"><div class="t" style="left:-300px;right:-300px;text-align:center;transform-origin:50% 0;transform:scaleX(1.0);top:2.5px;line-height:12px;font-size:9px;color:#0f2b5b">۸,۵۲۶,۳۰۰</div></div>
<div class="c" style="left:647px;top:332px;width:35px;height:31px;background:#d2e4f5;border-color:#b9b9b9"><div class="t" style="left:-300px;right:-300px;text-align:center;transform-origin:50% 0;transform:scaleX(1.0);top:2.5px;line-height:12px;font-size:9px;color:#0f2b5b">۴,۵۳۵</div></div>
<div class="c" style="left:610px;top:332px;width:38px;height:31px;background:#d2e4f5;border-color:#b9b9b9"><div class="t" style="left:-300px;right:-300px;text-align:center;transform-origin:50% 0;transform:scaleX(1.0);top:2.5px;line-height:12px;font-size:9px;color:#0f2b5b">۴,۹۱۳</div></div>
<div class="c" style="left:550px;top:332px;width:61px;height:31px;background:#d2e4f5;border-color:#b9b9b9"><div class="t" style="left:-300px;right:-300px;text-align:center;transform-origin:50% 0;transform:scaleX(1.0);top:2.5px;line-height:12px;font-size:9px;color:#0f2b5b">۳۰۹,۴۹۳,۴۸۵</div></div>
<div class="c" style="left:482px;top:332px;width:69px;height:31px;background:#d2e4f5;border-color:#b9b9b9"><div class="t" style="left:-300px;right:-300px;text-align:center;transform-origin:50% 0;transform:scaleX(1.0);top:2.5px;line-height:12px;font-size:9px;color:#0f2b5b">۱,۵۲۰,۳۳۳</div></div>
<div class="c" style="left:445px;top:332px;width:38px;height:31px;background:#d2e4f5;border-color:#b9b9b9"><div class="t" style="left:-300px;right:-300px;text-align:center;transform-origin:50% 0;transform:scaleX(1.0);top:2.5px;line-height:12px;font-size:9px;color:#0f2b5b">۳۰,۹۳۵</div></div>
<div class="c" style="left:406px;top:332px;width:40px;height:31px;background:#d2e4f5;border-color:#b9b9b9"><div class="t" style="left:-300px;right:-300px;text-align:center;transform-origin:50% 0;transform:scaleX(1.0);top:2.5px;line-height:12px;font-size:9px;color:#0f2b5b">۳۳,۹۰۳</div></div>
<div class="c" style="left:346px;top:332px;width:61px;height:31px;background:#d2e4f5;border-color:#b9b9b9"><div class="t" style="left:-300px;right:-300px;text-align:center;transform-origin:50% 0;transform:scaleX(1.0);top:2.5px;line-height:12px;font-size:9px;color:#0f2b5b">۲۹۶,۳۴۰,۳۹۳</div></div>
<div class="c" style="left:275px;top:332px;width:72px;height:31px;background:#d2e4f5;border-color:#b9b9b9"><div class="t" style="left:-300px;right:-300px;text-align:center;transform-origin:50% 0;transform:scaleX(1.0);top:2.5px;line-height:12px;font-size:9px;color:#0f2b5b">۱۰,۰۴۶,۵۳۳</div></div>
<div class="c" style="left:238px;top:332px;width:38px;height:31px;background:#d2e4f5;border-color:#b9b9b9"><div class="t" style="left:-300px;right:-300px;text-align:center;transform-origin:50% 0;transform:scaleX(1.0);top:2.5px;line-height:12px;font-size:9px;color:#0f2b5b">۳۷,۶۶۰</div></div>
<div class="c" style="left:199px;top:332px;width:40px;height:31px;background:#d2e4f5;border-color:#b9b9b9"><div class="t" style="left:-300px;right:-300px;text-align:center;transform-origin:50% 0;transform:scaleX(1.0);top:2.5px;line-height:12px;font-size:9px;color:#0f2b5b">۳۰,۳۱۴</div></div>
<div class="c" style="left:140px;top:332px;width:60px;height:31px;background:#d2e4f5;border-color:#b9b9b9"><div class="t" style="left:-300px;right:-300px;text-align:center;transform-origin:50% 0;transform:scaleX(1.0);top:2.5px;line-height:12px;font-size:9px;color:#0f2b5b">۲۳۹,۰۵۵,۵۵۳</div></div>
<div class="c" style="left:73px;top:332px;width:68px;height:31px;background:#d2e4f5;border-color:#b9b9b9"><div class="t" style="left:-300px;right:-300px;text-align:center;transform-origin:50% 0;transform:scaleX(1.0);top:2.5px;line-height:12px;font-size:9px;color:#0f2b5b">۷,۲۴۶,۷۳۰</div></div>
<div class="c" style="left:15px;top:332px;width:59px;height:31px;background:#d2e4f5;border-color:#b9b9b9"><div class="t" style="left:-600px;right:2px;text-align:right;transform-origin:100% 0;transform:scaleX(0.78);top:2px;line-height:12px;font-size:10px;color:#0f2b5b">تولید</div></div>
<div class="c" style="left:1245px;top:362px;width:59px;height:30px;background:#ffe29e;border-color:#b9b9b9"><div class="t" style="left:-600px;right:2px;text-align:right;transform-origin:100% 0;transform:scaleX(0.78);top:2px;line-height:12px;font-size:10px;color:#0f2b5b">جمع فروش<br>داخلی</div></div>
<div class="c" style="left:1224px;top:362px;width:22px;height:30px;background:#ffe29e;border-color:#b9b9b9"></div>
<div class="c" style="left:1188px;top:362px;width:37px;height:30px;background:#ffe29e;border-color:#b9b9b9"><div class="t" style="left:-600px;right:3px;text-align:right;transform-origin:100% 0;transform:scaleX(1.0);top:2.5px;line-height:12px;font-size:9px;color:#0f2b5b">-</div></div>
<div class="c" style="left:1149px;top:362px;width:40px;height:30px;background:#ffe29e;border-color:#b9b9b9"><div class="t" style="left:-300px;right:-300px;text-align:center;transform-origin:50% 0;transform:scaleX(1.0);top:2.5px;line-height:12px;font-size:9px;color:#0f2b5b">۳۴,۹۶۳</div></div>
<div class="c" style="left:1090px;top:362px;width:60px;height:30px;background:#ffe29e;border-color:#b9b9b9"></div>
<div class="c" style="left:1020px;top:362px;width:71px;height:30px;background:#ffe29e;border-color:#b9b9b9"><div class="t" style="left:-300px;right:-300px;text-align:center;transform-origin:50% 0;transform:scaleX(1.0);top:2.5px;line-height:12px;font-size:9px;color:#0f2b5b">۱۰,۱۹۸,۹۱۳</div></div>
<div class="c" style="left:987px;top:362px;width:34px;height:30px;background:#ffe29e;border-color:#b9b9b9"><div class="t" style="left:-300px;right:-300px;text-align:center;transform-origin:50% 0;transform:scaleX(1.0);top:2.5px;line-height:12px;font-size:9px;color:#0f2b5b">-</div></div>
<div class="c" style="left:950px;top:362px;width:38px;height:30px;background:#ffe29e;border-color:#b9b9b9"><div class="t" style="left:-300px;right:-300px;text-align:center;transform-origin:50% 0;transform:scaleX(1.0);top:2.5px;line-height:12px;font-size:9px;color:#0f2b5b">-</div></div>
<div class="c" style="left:887px;top:362px;width:64px;height:30px;background:#ffe29e;border-color:#b9b9b9"><div class="t" style="left:-300px;right:-300px;text-align:center;transform-origin:50% 0;transform:scaleX(1.0);top:2.5px;line-height:12px;font-size:9px;color:#0f2b5b">-</div></div>
<div class="c" style="left:851px;top:362px;width:37px;height:30px;background:#ffe29e;border-color:#b9b9b9"><div class="t" style="left:-600px;right:3px;text-align:right;transform-origin:100% 0;transform:scaleX(1.0);top:2.5px;line-height:12px;font-size:9px;color:#0f2b5b">-</div></div>
<div class="c" style="left:812px;top:362px;width:40px;height:30px;background:#ffe29e;border-color:#b9b9b9"><div class="t" style="left:-300px;right:-300px;text-align:center;transform-origin:50% 0;transform:scaleX(1.0);top:2.5px;line-height:12px;font-size:9px;color:#0f2b5b">۳۴,۹۶۳</div></div>
<div class="c" style="left:752px;top:362px;width:61px;height:30px;background:#ffe29e;border-color:#b9b9b9"></div>
<div class="c" style="left:681px;top:362px;width:72px;height:30px;background:#ffe29e;border-color:#b9b9b9"><div class="t" style="left:-300px;right:-300px;text-align:center;transform-origin:50% 0;transform:scaleX(1.0);top:2.5px;line-height:12px;font-size:9px;color:#0f2b5b">۱۰,۱۹۸,۹۱۳</div></div>
<div class="c" style="left:647px;top:362px;width:35px;height:30px;background:#ffe29e;border-color:#b9b9b9"><div class="t" style="left:-600px;right:3px;text-align:right;transform-origin:100% 0;transform:scaleX(1.0);top:2.5px;line-height:12px;font-size:9px;color:#0f2b5b">-</div></div>
<div class="c" style="left:610px;top:362px;width:38px;height:30px;background:#ffe29e;border-color:#b9b9b9"><div class="t" style="left:-300px;right:-300px;text-align:center;transform-origin:50% 0;transform:scaleX(1.0);top:2.5px;line-height:12px;font-size:9px;color:#0f2b5b">۵,۶۴۱</div></div>
<div class="c" style="left:550px;top:362px;width:61px;height:30px;background:#ffe29e;border-color:#b9b9b9"></div>
<div class="c" style="left:482px;top:362px;width:69px;height:30px;background:#ffe29e;border-color:#b9b9b9"><div class="t" style="left:-300px;right:-300px;text-align:center;transform-origin:50% 0;transform:scaleX(1.0);top:2.5px;line-height:12px;font-size:9px;color:#0f2b5b">۱,۷۷۰,۰۱۵</div></div>
<div class="c" style="left:445px;top:362px;width:38px;height:30px;background:#ffe29e;border-color:#b9b9b9"><div class="t" style="left:-600px;right:3px;text-align:right;transform-origin:100% 0;transform:scaleX(1.0);top:2.5px;line-height:12px;font-size:9px;color:#0f2b5b">-</div></div>
<div class="c" style="left:406px;top:362px;width:40px;height:30px;background:#ffe29e;border-color:#b9b9b9"><div class="t" style="left:-300px;right:-300px;text-align:center;transform-origin:50% 0;transform:scaleX(1.0);top:2.5px;line-height:12px;font-size:9px;color:#0f2b5b">۴۰,۶۰۴</div></div>
<div class="c" style="left:346px;top:362px;width:61px;height:30px;background:#ffe29e;border-color:#b9b9b9"></div>
<div class="c" style="left:275px;top:362px;width:72px;height:30px;background:#ffe29e;border-color:#b9b9b9"><div class="t" style="left:-300px;right:-300px;text-align:center;transform-origin:50% 0;transform:scaleX(1.0);top:2.5px;line-height:12px;font-size:9px;color:#0f2b5b">۱۱,۹۶۸,۹۳۸</div></div>
<div class="c" style="left:238px;top:362px;width:38px;height:30px;background:#ffe29e;border-color:#b9b9b9"><div class="t" style="left:-600px;right:3px;text-align:right;transform-origin:100% 0;transform:scaleX(1.0);top:2.5px;line-height:12px;font-size:9px;color:#0f2b5b">-</div></div>
<div class="c" style="left:199px;top:362px;width:40px;height:30px;background:#ffe29e;border-color:#b9b9b9"><div class="t" style="left:-300px;right:-300px;text-align:center;transform-origin:50% 0;transform:scaleX(1.0);top:2.5px;line-height:12px;font-size:9px;color:#0f2b5b">۳۶,۵۸۳</div></div>
<div class="c" style="left:140px;top:362px;width:60px;height:30px;background:#ffe29e;border-color:#b9b9b9"></div>
<div class="c" style="left:73px;top:362px;width:68px;height:30px;background:#ffe29e;border-color:#b9b9b9"><div class="t" style="left:-300px;right:-300px;text-align:center;transform-origin:50% 0;transform:scaleX(1.0);top:2.5px;line-height:12px;font-size:9px;color:#0f2b5b">۸,۶۰۷,۵۹۸</div></div>
<div class="c" style="left:15px;top:362px;width:59px;height:30px;background:#ffe29e;border-color:#b9b9b9"></div>
<div class="c" style="left:1245px;top:391px;width:59px;height:30px;background:#d3d3d3;border-color:#b9b9b9"><div class="t" style="left:-600px;right:2px;text-align:right;transform-origin:100% 0;transform:scaleX(0.74);top:2px;line-height:12px;font-size:10px;font-weight:bold;color:#0f2b5b">فروش<br>صادراتی:</div></div>
<div class="c" style="left:1224px;top:391px;width:22px;height:30px;background:#d3d3d3;border-color:#b9b9b9"></div>
<div class="c" style="left:1188px;top:391px;width:37px;height:30px;background:#d3d3d3;border-color:#b9b9b9"></div>
<div class="c" style="left:1149px;top:391px;width:40px;height:30px;background:#d3d3d3;border-color:#b9b9b9"></div>
<div class="c" style="left:1090px;top:391px;width:60px;height:30px;background:#d3d3d3;border-color:#b9b9b9"></div>
<div class="c" style="left:1020px;top:391px;width:71px;height:30px;background:#d3d3d3;border-color:#b9b9b9"></div>
<div class="c" style="left:987px;top:391px;width:34px;height:30px;background:#d3d3d3;border-color:#b9b9b9"></div>
<div class="c" style="left:950px;top:391px;width:38px;height:30px;background:#d3d3d3;border-color:#b9b9b9"></div>
<div class="c" style="left:887px;top:391px;width:64px;height:30px;background:#d3d3d3;border-color:#b9b9b9"></div>
<div class="c" style="left:851px;top:391px;width:37px;height:30px;background:#d3d3d3;border-color:#b9b9b9"></div>
<div class="c" style="left:812px;top:391px;width:40px;height:30px;background:#d3d3d3;border-color:#b9b9b9"></div>
<div class="c" style="left:752px;top:391px;width:61px;height:30px;background:#d3d3d3;border-color:#b9b9b9"></div>
<div class="c" style="left:681px;top:391px;width:72px;height:30px;background:#d3d3d3;border-color:#b9b9b9"></div>
<div class="c" style="left:647px;top:391px;width:35px;height:30px;background:#d3d3d3;border-color:#b9b9b9"></div>
<div class="c" style="left:610px;top:391px;width:38px;height:30px;background:#d3d3d3;border-color:#b9b9b9"></div>
<div class="c" style="left:550px;top:391px;width:61px;height:30px;background:#d3d3d3;border-color:#b9b9b9"></div>
<div class="c" style="left:482px;top:391px;width:69px;height:30px;background:#d3d3d3;border-color:#b9b9b9"></div>
<div class="c" style="left:445px;top:391px;width:38px;height:30px;background:#d3d3d3;border-color:#b9b9b9"></div>
<div class="c" style="left:406px;top:391px;width:40px;height:30px;background:#d3d3d3;border-color:#b9b9b9"></div>
<div class="c" style="left:346px;top:391px;width:61px;height:30px;background:#d3d3d3;border-color:#b9b9b9"></div>
<div class="c" style="left:275px;top:391px;width:72px;height:30px;background:#d3d3d3;border-color:#b9b9b9"></div>
<div class="c" style="left:238px;top:391px;width:38px;height:30px;background:#d3d3d3;border-color:#b9b9b9"></div>
<div class="c" style="left:199px;top:391px;width:40px;height:30px;background:#d3d3d3;border-color:#b9b9b9"></div>
<div class="c" style="left:140px;top:391px;width:60px;height:30px;background:#d3d3d3;border-color:#b9b9b9"></div>
<div class="c" style="left:73px;top:391px;width:68px;height:30px;background:#d3d3d3;border-color:#b9b9b9"></div>
<div class="c" style="left:15px;top:391px;width:59px;height:30px;background:#d3d3d3;border-color:#b9b9b9"></div>
<div class="c" style="left:1245px;top:420px;width:59px;height:18px;background:#d2e4f5;border-color:#b9b9b9"><div class="t" style="left:-600px;right:2px;text-align:right;transform-origin:100% 0;transform:scaleX(0.78);top:2px;line-height:12px;font-size:10px;color:#0f2b5b">سایر</div></div>
<div class="c" style="left:1224px;top:420px;width:22px;height:18px;background:#d2e4f5;border-color:#b9b9b9"><div class="t" style="left:-600px;right:2px;text-align:right;transform-origin:100% 0;transform:scaleX(0.78);top:2px;line-height:12px;font-size:10px;color:#0f2b5b">تن</div></div>
<div class="c" style="left:1188px;top:420px;width:37px;height:18px;background:#d2e4f5;border-color:#b9b9b9"><div class="t" style="left:-300px;right:-300px;text-align:center;transform-origin:50% 0;transform:scaleX(1.0);top:2.5px;line-height:12px;font-size:9px;color:#0f2b5b">-</div></div>
<div class="c" style="left:1149px;top:420px;width:40px;height:18px;background:#d2e4f5;border-color:#b9b9b9"><div class="t" style="left:-300px;right:-300px;text-align:center;transform-origin:50% 0;transform:scaleX(1.0);top:2.5px;line-height:12px;font-size:9px;color:#0f2b5b">-</div></div>
<div class="c" style="left:1090px;top:420px;width:60px;height:18px;background:#d2e4f5;border-color:#b9b9b9"><div class="t" style="left:-300px;right:-300px;text-align:center;transform-origin:50% 0;transform:scaleX(1.0);top:2.5px;line-height:12px;font-size:9px;color:#0f2b5b">-</div></div>
<div class="c" style="left:1020px;top:420px;width:71px;height:18px;background:#d2e4f5;border-color:#b9b9b9"><div class="t" style="left:-300px;right:-300px;text-align:center;transform-origin:50% 0;transform:scaleX(1.0);top:2.5px;line-height:12px;font-size:9px;color:#0f2b5b">-</div></div>
<div class="c" style="left:987px;top:420px;width:34px;height:18px;background:#d2e4f5;border-color:#b9b9b9"></div>
<div class="c" style="left:950px;top:420px;width:38px;height:18px;background:#d2e4f5;border-color:#b9b9b9"></div>
<div class="c" style="left:887px;top:420px;width:64px;height:18px;background:#d2e4f5;border-color:#b9b9b9"><div class="t" style="left:-300px;right:-300px;text-align:center;transform-origin:50% 0;transform:scaleX(1.0);top:2.5px;line-height:12px;font-size:9px;color:#0f2b5b">-</div></div>
<div class="c" style="left:851px;top:420px;width:37px;height:18px;background:#d2e4f5;border-color:#b9b9b9"><div class="t" style="left:-300px;right:-300px;text-align:center;transform-origin:50% 0;transform:scaleX(1.0);top:2.5px;line-height:12px;font-size:9px;color:#0f2b5b">-</div></div>
<div class="c" style="left:812px;top:420px;width:40px;height:18px;background:#d2e4f5;border-color:#b9b9b9"><div class="t" style="left:-300px;right:-300px;text-align:center;transform-origin:50% 0;transform:scaleX(1.0);top:2.5px;line-height:12px;font-size:9px;color:#0f2b5b">-</div></div>
<div class="c" style="left:752px;top:420px;width:61px;height:18px;background:#d2e4f5;border-color:#b9b9b9"><div class="t" style="left:-300px;right:-300px;text-align:center;transform-origin:50% 0;transform:scaleX(1.0);top:2.5px;line-height:12px;font-size:9px;color:#0f2b5b">-</div></div>
<div class="c" style="left:681px;top:420px;width:72px;height:18px;background:#d2e4f5;border-color:#b9b9b9"><div class="t" style="left:-300px;right:-300px;text-align:center;transform-origin:50% 0;transform:scaleX(1.0);top:2.5px;line-height:12px;font-size:9px;color:#0f2b5b">-</div></div>
<div class="c" style="left:647px;top:420px;width:35px;height:18px;background:#d2e4f5;border-color:#b9b9b9"></div>
<div class="c" style="left:610px;top:420px;width:38px;height:18px;background:#d2e4f5;border-color:#b9b9b9"></div>
<div class="c" style="left:550px;top:420px;width:61px;height:18px;background:#d2e4f5;border-color:#b9b9b9"><div class="t" style="left:-300px;right:-300px;text-align:center;transform-origin:50% 0;transform:scaleX(1.0);top:2.5px;line-height:12px;font-size:9px;color:#0f2b5b">-</div></div>
<div class="c" style="left:482px;top:420px;width:69px;height:18px;background:#d2e4f5;border-color:#b9b9b9"><div class="t" style="left:-300px;right:-300px;text-align:center;transform-origin:50% 0;transform:scaleX(1.0);top:2.5px;line-height:12px;font-size:9px;color:#0f2b5b">-</div></div>
<div class="c" style="left:445px;top:420px;width:38px;height:18px;background:#d2e4f5;border-color:#b9b9b9"><div class="t" style="left:-300px;right:-300px;text-align:center;transform-origin:50% 0;transform:scaleX(1.0);top:2.5px;line-height:12px;font-size:9px;color:#0f2b5b">-</div></div>
<div class="c" style="left:406px;top:420px;width:40px;height:18px;background:#d2e4f5;border-color:#b9b9b9"><div class="t" style="left:-300px;right:-300px;text-align:center;transform-origin:50% 0;transform:scaleX(1.0);top:2.5px;line-height:12px;font-size:9px;color:#0f2b5b">-</div></div>
<div class="c" style="left:346px;top:420px;width:61px;height:18px;background:#d2e4f5;border-color:#b9b9b9"><div class="t" style="left:-300px;right:-300px;text-align:center;transform-origin:50% 0;transform:scaleX(1.0);top:2.5px;line-height:12px;font-size:9px;color:#0f2b5b">-</div></div>
<div class="c" style="left:275px;top:420px;width:72px;height:18px;background:#d2e4f5;border-color:#b9b9b9"><div class="t" style="left:-300px;right:-300px;text-align:center;transform-origin:50% 0;transform:scaleX(1.0);top:2.5px;line-height:12px;font-size:9px;color:#0f2b5b">-</div></div>
<div class="c" style="left:238px;top:420px;width:38px;height:18px;background:#d2e4f5;border-color:#b9b9b9"><div class="t" style="left:-300px;right:-300px;text-align:center;transform-origin:50% 0;transform:scaleX(1.0);top:2.5px;line-height:12px;font-size:9px;color:#0f2b5b">۹۸</div></div>
<div class="c" style="left:199px;top:420px;width:40px;height:18px;background:#d2e4f5;border-color:#b9b9b9"><div class="t" style="left:-300px;right:-300px;text-align:center;transform-origin:50% 0;transform:scaleX(1.0);top:2.5px;line-height:12px;font-size:9px;color:#0f2b5b">۱۴۶</div></div>
<div class="c" style="left:140px;top:420px;width:60px;height:18px;background:#d2e4f5;border-color:#b9b9b9"><div class="t" style="left:-300px;right:-300px;text-align:center;transform-origin:50% 0;transform:scaleX(1.0);top:2.5px;line-height:12px;font-size:9px;color:#0f2b5b">۳۸۲,۶۵۰,۶۸۵</div></div>
<div class="c" style="left:73px;top:420px;width:68px;height:18px;background:#d2e4f5;border-color:#b9b9b9"><div class="t" style="left:-300px;right:-300px;text-align:center;transform-origin:50% 0;transform:scaleX(1.0);top:2.5px;line-height:12px;font-size:9px;color:#0f2b5b">۵۵,۸۶۷</div></div>
<div class="c" style="left:15px;top:420px;width:59px;height:18px;background:#d2e4f5;border-color:#b9b9b9"><div class="t" style="left:-600px;right:2px;text-align:right;transform-origin:100% 0;transform:scaleX(0.78);top:2px;line-height:12px;font-size:10px;color:#0f2b5b">تولید</div></div>
<div class="c" style="left:1245px;top:437px;width:59px;height:30px;background:#eeeeee;border-color:#b9b9b9"><div class="t" style="left:-600px;right:2px;text-align:right;transform-origin:100% 0;transform:scaleX(0.78);top:2px;line-height:12px;font-size:10px;color:#0f2b5b">پودر و مایعات<br>البسه</div></div>
<div class="c" style="left:1224px;top:437px;width:22px;height:30px;background:#eeeeee;border-color:#b9b9b9"><div class="t" style="left:-600px;right:2px;text-align:right;transform-origin:100% 0;transform:scaleX(0.78);top:2px;line-height:12px;font-size:10px;color:#0f2b5b">تن</div></div>
<div class="c" style="left:1188px;top:437px;width:37px;height:30px;background:#eeeeee;border-color:#b9b9b9"><div class="t" style="left:-300px;right:-300px;text-align:center;transform-origin:50% 0;transform:scaleX(1.0);top:2.5px;line-height:12px;font-size:9px;color:#0f2b5b">۲,۳۵۰</div></div>
<div class="c" style="left:1149px;top:437px;width:40px;height:30px;background:#eeeeee;border-color:#b9b9b9"><div class="t" style="left:-300px;right:-300px;text-align:center;transform-origin:50% 0;transform:scaleX(1.0);top:2.5px;line-height:12px;font-size:9px;color:#0f2b5b">۲,۳۳۷</div></div>
<div class="c" style="left:1090px;top:437px;width:60px;height:30px;background:#eeeeee;border-color:#b9b9b9"><div class="t" style="left:-300px;right:-300px;text-align:center;transform-origin:50% 0;transform:scaleX(1.0);top:2.5px;line-height:12px;font-size:9px;color:#0f2b5b">۱۲۳,۱۰۴,۸۵۶</div></div>
<div class="c" style="left:1020px;top:437px;width:71px;height:30px;background:#eeeeee;border-color:#b9b9b9"><div class="t" style="left:-300px;right:-300px;text-align:center;transform-origin:50% 0;transform:scaleX(1.0);top:2.5px;line-height:12px;font-size:9px;color:#0f2b5b">۲۸۶,۴۶۵</div></div>
<div class="c" style="left:987px;top:437px;width:34px;height:30px;background:#eeeeee;border-color:#b9b9b9"></div>
<div class="c" style="left:950px;top:437px;width:38px;height:30px;background:#eeeeee;border-color:#b9b9b9"></div>
<div class="c" style="left:887px;top:437px;width:64px;height:30px;background:#eeeeee;border-color:#b9b9b9"><div class="t" style="left:-300px;right:-300px;text-align:center;transform-origin:50% 0;transform:scaleX(1.0);top:2.5px;line-height:12px;font-size:9px;color:#0f2b5b">-</div></div>
<div class="c" style="left:851px;top:437px;width:37px;height:30px;background:#eeeeee;border-color:#b9b9b9"><div class="t" style="left:-300px;right:-300px;text-align:center;transform-origin:50% 0;transform:scaleX(1.0);top:2.5px;line-height:12px;font-size:9px;color:#0f2b5b">۲,۳۵۰</div></div>
<div class="c" style="left:812px;top:437px;width:40px;height:30px;background:#eeeeee;border-color:#b9b9b9"><div class="t" style="left:-300px;right:-300px;text-align:center;transform-origin:50% 0;transform:scaleX(1.0);top:2.5px;line-height:12px;font-size:9px;color:#0f2b5b">۲,۳۳۷</div></div>
<div class="c" style="left:752px;top:437px;width:61px;height:30px;background:#eeeeee;border-color:#b9b9b9"><div class="t" style="left:-300px;right:-300px;text-align:center;transform-origin:50% 0;transform:scaleX(1.0);top:2.5px;line-height:12px;font-size:9px;color:#0f2b5b">۱۲۳,۱۰۴,۸۵۶</div></div>
<div class="c" style="left:681px;top:437px;width:72px;height:30px;background:#eeeeee;border-color:#b9b9b9"><div class="t" style="left:-300px;right:-300px;text-align:center;transform-origin:50% 0;transform:scaleX(1.0);top:2.5px;line-height:12px;font-size:9px;color:#0f2b5b">۲۸۶,۴۶۵</div></div>
<div class="c" style="left:647px;top:437px;width:35px;height:30px;background:#eeeeee;border-color:#b9b9b9"><div class="t" style="left:-300px;right:-300px;text-align:center;transform-origin:50% 0;transform:scaleX(1.0);top:2.5px;line-height:12px;font-size:9px;color:#0f2b5b">۶۳۶</div></div>
<div class="c" style="left:610px;top:437px;width:38px;height:30px;background:#eeeeee;border-color:#b9b9b9"><div class="t" style="left:-300px;right:-300px;text-align:center;transform-origin:50% 0;transform:scaleX(1.0);top:2.5px;line-height:12px;font-size:9px;color:#0f2b5b">۶۵۰</div></div>
<div class="c" style="left:550px;top:437px;width:61px;height:30px;background:#eeeeee;border-color:#b9b9b9"><div class="t" style="left:-300px;right:-300px;text-align:center;transform-origin:50% 0;transform:scaleX(1.0);top:2.5px;line-height:12px;font-size:9px;color:#0f2b5b">۱۲۳,۵۰۳,۰۷۷</div></div>
<div class="c" style="left:482px;top:437px;width:69px;height:30px;background:#eeeeee;border-color:#b9b9b9"><div class="t" style="left:-300px;right:-300px;text-align:center;transform-origin:50% 0;transform:scaleX(1.0);top:2.5px;line-height:12px;font-size:9px;color:#0f2b5b">۸۰,۲۷۷</div></div>
<div class="c" style="left:445px;top:437px;width:38px;height:30px;background:#eeeeee;border-color:#b9b9b9"><div class="t" style="left:-300px;right:-300px;text-align:center;transform-origin:50% 0;transform:scaleX(1.0);top:2.5px;line-height:12px;font-size:9px;color:#0f2b5b">۲,۹۸۶</div></div>
<div class="c" style="left:406px;top:437px;width:40px;height:30px;background:#eeeeee;border-color:#b9b9b9"><div class="t" style="left:-300px;right:-300px;text-align:center;transform-origin:50% 0;transform:scaleX(1.0);top:2.5px;line-height:12px;font-size:9px;color:#0f2b5b">۲,۹۷۷</div></div>
<div class="c" style="left:346px;top:437px;width:61px;height:30px;background:#eeeeee;border-color:#b9b9b9"><div class="t" style="left:-300px;right:-300px;text-align:center;transform-origin:50% 0;transform:scaleX(1.0);top:2.5px;line-height:12px;font-size:9px;color:#0f2b5b">۱۲۳,۱۹۱,۸۰۴</div></div>
<div class="c" style="left:275px;top:437px;width:72px;height:30px;background:#eeeeee;border-color:#b9b9b9"><div class="t" style="left:-300px;right:-300px;text-align:center;transform-origin:50% 0;transform:scaleX(1.0);top:2.5px;line-height:12px;font-size:9px;color:#0f2b5b">۳۶۶,۷۴۳</div></div>
<div class="c" style="left:238px;top:437px;width:38px;height:30px;background:#eeeeee;border-color:#b9b9b9"><div class="t" style="left:-300px;right:-300px;text-align:center;transform-origin:50% 0;transform:scaleX(1.0);top:2.5px;line-height:12px;font-size:9px;color:#0f2b5b">۴,۴۷۶</div></div>
<div class="c" style="left:199px;top:437px;width:40px;height:30px;background:#eeeeee;border-color:#b9b9b9"><div class="t" style="left:-300px;right:-300px;text-align:center;transform-origin:50% 0;transform:scaleX(1.0);top:2.5px;line-height:12px;font-size:9px;color:#0f2b5b">۴,۴۸۳</div></div>
<div class="c" style="left:140px;top:437px;width:60px;height:30px;background:#eeeeee;border-color:#b9b9b9"><div class="t" style="left:-300px;right:-300px;text-align:center;transform-origin:50% 0;transform:scaleX(1.0);top:2.5px;line-height:12px;font-size:9px;color:#0f2b5b">۹۳,۲۹۶,۹۶۶</div></div>
<div class="c" style="left:73px;top:437px;width:68px;height:30px;background:#eeeeee;border-color:#b9b9b9"><div class="t" style="left:-300px;right:-300px;text-align:center;transform-origin:50% 0;transform:scaleX(1.0);top:2.5px;line-height:12px;font-size:9px;color:#0f2b5b">۴۱۸,۱۵۷</div></div>
<div class="c" style="left:15px;top:437px;width:59px;height:30px;background:#eeeeee;border-color:#b9b9b9"><div class="t" style="left:-600px;right:2px;text-align:right;transform-origin:100% 0;transform:scaleX(0.78);top:2px;line-height:12px;font-size:10px;color:#0f2b5b">تولید</div></div>
<div class="c" style="left:1245px;top:466px;width:59px;height:30px;background:#ffe29e;border-color:#b9b9b9"><div class="t" style="left:-600px;right:2px;text-align:right;transform-origin:100% 0;transform:scaleX(0.78);top:2px;line-height:12px;font-size:10px;color:#0f2b5b">جمع فروش<br>صادراتی</div></div>
<div class="c" style="left:1224px;top:466px;width:22px;height:30px;background:#ffe29e;border-color:#b9b9b9"></div>
<div class="c" style="left:1188px;top:466px;width:37px;height:30px;background:#ffe29e;border-color:#b9b9b9"><div class="t" style="left:-600px;right:3px;text-align:right;transform-origin:100% 0;transform:scaleX(1.0);top:2.5px;line-height:12px;font-size:9px;color:#0f2b5b">-</div></div>
<div class="c" style="left:1149px;top:466px;width:40px;height:30px;background:#ffe29e;border-color:#b9b9b9"><div class="t" style="left:-300px;right:-300px;text-align:center;transform-origin:50% 0;transform:scaleX(1.0);top:2.5px;line-height:12px;font-size:9px;color:#0f2b5b">۲,۳۳۷</div></div>
<div class="c" style="left:1090px;top:466px;width:60px;height:30px;background:#ffe29e;border-color:#b9b9b9"></div>
<div class="c" style="left:1020px;top:466px;width:71px;height:30px;background:#ffe29e;border-color:#b9b9b9"><div class="t" style="left:-300px;right:-300px;text-align:center;transform-origin:50% 0;transform:scaleX(1.0);top:2.5px;line-height:12px;font-size:9px;color:#0f2b5b">۲۸۶,۴۶۵</div></div>
<div class="c" style="left:987px;top:466px;width:34px;height:30px;background:#ffe29e;border-color:#b9b9b9"><div class="t" style="left:-300px;right:-300px;text-align:center;transform-origin:50% 0;transform:scaleX(1.0);top:2.5px;line-height:12px;font-size:9px;color:#0f2b5b">-</div></div>
<div class="c" style="left:950px;top:466px;width:38px;height:30px;background:#ffe29e;border-color:#b9b9b9"><div class="t" style="left:-300px;right:-300px;text-align:center;transform-origin:50% 0;transform:scaleX(1.0);top:2.5px;line-height:12px;font-size:9px;color:#0f2b5b">-</div></div>
<div class="c" style="left:887px;top:466px;width:64px;height:30px;background:#ffe29e;border-color:#b9b9b9"><div class="t" style="left:-300px;right:-300px;text-align:center;transform-origin:50% 0;transform:scaleX(1.0);top:2.5px;line-height:12px;font-size:9px;color:#0f2b5b">-</div></div>
<div class="c" style="left:851px;top:466px;width:37px;height:30px;background:#ffe29e;border-color:#b9b9b9"><div class="t" style="left:-600px;right:3px;text-align:right;transform-origin:100% 0;transform:scaleX(1.0);top:2.5px;line-height:12px;font-size:9px;color:#0f2b5b">-</div></div>
<div class="c" style="left:812px;top:466px;width:40px;height:30px;background:#ffe29e;border-color:#b9b9b9"><div class="t" style="left:-300px;right:-300px;text-align:center;transform-origin:50% 0;transform:scaleX(1.0);top:2.5px;line-height:12px;font-size:9px;color:#0f2b5b">۲,۳۳۷</div></div>
<div class="c" style="left:752px;top:466px;width:61px;height:30px;background:#ffe29e;border-color:#b9b9b9"></div>
<div class="c" style="left:681px;top:466px;width:72px;height:30px;background:#ffe29e;border-color:#b9b9b9"><div class="t" style="left:-300px;right:-300px;text-align:center;transform-origin:50% 0;transform:scaleX(1.0);top:2.5px;line-height:12px;font-size:9px;color:#0f2b5b">۲۸۶,۴۶۵</div></div>
<div class="c" style="left:647px;top:466px;width:35px;height:30px;background:#ffe29e;border-color:#b9b9b9"><div class="t" style="left:-600px;right:3px;text-align:right;transform-origin:100% 0;transform:scaleX(1.0);top:2.5px;line-height:12px;font-size:9px;color:#0f2b5b">-</div></div>
<div class="c" style="left:610px;top:466px;width:38px;height:30px;background:#ffe29e;border-color:#b9b9b9"><div class="t" style="left:-300px;right:-300px;text-align:center;transform-origin:50% 0;transform:scaleX(1.0);top:2.5px;line-height:12px;font-size:9px;color:#0f2b5b">۶۵۰</div></div>
<div class="c" style="left:550px;top:466px;width:61px;height:30px;background:#ffe29e;border-color:#b9b9b9"></div>
<div class="c" style="left:482px;top:466px;width:69px;height:30px;background:#ffe29e;border-color:#b9b9b9"><div class="t" style="left:-300px;right:-300px;text-align:center;transform-origin:50% 0;transform:scaleX(1.0);top:2.5px;line-height:12px;font-size:9px;color:#0f2b5b">۸۰,۲۷۷</div></div>
<div class="c" style="left:445px;top:466px;width:38px;height:30px;background:#ffe29e;border-color:#b9b9b9"><div class="t" style="left:-600px;right:3px;text-align:right;transform-origin:100% 0;transform:scaleX(1.0);top:2.5px;line-height:12px;font-size:9px;color:#0f2b5b">-</div></div>
<div class="c" style="left:406px;top:466px;width:40px;height:30px;background:#ffe29e;border-color:#b9b9b9"><div class="t" style="left:-300px;right:-300px;text-align:center;transform-origin:50% 0;transform:scaleX(1.0);top:2.5px;line-height:12px;font-size:9px;color:#0f2b5b">۲,۹۷۷</div></div>
<div class="c" style="left:346px;top:466px;width:61px;height:30px;background:#ffe29e;border-color:#b9b9b9"></div>
<div class="c" style="left:275px;top:466px;width:72px;height:30px;background:#ffe29e;border-color:#b9b9b9"><div class="t" style="left:-300px;right:-300px;text-align:center;transform-origin:50% 0;transform:scaleX(1.0);top:2.5px;line-height:12px;font-size:9px;color:#0f2b5b">۳۶۶,۷۴۳</div></div>
<div class="c" style="left:238px;top:466px;width:38px;height:30px;background:#ffe29e;border-color:#b9b9b9"><div class="t" style="left:-600px;right:3px;text-align:right;transform-origin:100% 0;transform:scaleX(1.0);top:2.5px;line-height:12px;font-size:9px;color:#0f2b5b">-</div></div>
<div class="c" style="left:199px;top:466px;width:40px;height:30px;background:#ffe29e;border-color:#b9b9b9"><div class="t" style="left:-300px;right:-300px;text-align:center;transform-origin:50% 0;transform:scaleX(1.0);top:2.5px;line-height:12px;font-size:9px;color:#0f2b5b">۴,۶۲۸</div></div>
<div class="c" style="left:140px;top:466px;width:60px;height:30px;background:#ffe29e;border-color:#b9b9b9"></div>
<div class="c" style="left:73px;top:466px;width:68px;height:30px;background:#ffe29e;border-color:#b9b9b9"><div class="t" style="left:-300px;right:-300px;text-align:center;transform-origin:50% 0;transform:scaleX(1.0);top:2.5px;line-height:12px;font-size:9px;color:#0f2b5b">۴۷۴,۰۲۴</div></div>
<div class="c" style="left:15px;top:466px;width:59px;height:30px;background:#ffe29e;border-color:#b9b9b9"></div>
<div class="c" style="left:1245px;top:495px;width:59px;height:30px;background:#d3d3d3;border-color:#b9b9b9"><div class="t" style="left:-600px;right:2px;text-align:right;transform-origin:100% 0;transform:scaleX(0.74);top:2px;line-height:12px;font-size:10px;font-weight:bold;color:#0f2b5b">درآمد ارائه<br>خدمات:</div></div>
<div class="c" style="left:1224px;top:495px;width:22px;height:30px;background:#d3d3d3;border-color:#b9b9b9"></div>
<div class="c" style="left:1188px;top:495px;width:37px;height:30px;background:#d3d3d3;border-color:#b9b9b9"></div>
<div class="c" style="left:1149px;top:495px;width:40px;height:30px;background:#d3d3d3;border-color:#b9b9b9"></div>
<div class="c" style="left:1090px;top:495px;width:60px;height:30px;background:#d3d3d3;border-color:#b9b9b9"></div>
<div class="c" style="left:1020px;top:495px;width:71px;height:30px;background:#d3d3d3;border-color:#b9b9b9"></div>
<div class="c" style="left:987px;top:495px;width:34px;height:30px;background:#d3d3d3;border-color:#b9b9b9"></div>
<div class="c" style="left:950px;top:495px;width:38px;height:30px;background:#d3d3d3;border-color:#b9b9b9"></div>
<div class="c" style="left:887px;top:495px;width:64px;height:30px;background:#d3d3d3;border-color:#b9b9b9"></div>
<div class="c" style="left:851px;top:495px;width:37px;height:30px;background:#d3d3d3;border-color:#b9b9b9"></div>
<div class="c" style="left:812px;top:495px;width:40px;height:30px;background:#d3d3d3;border-color:#b9b9b9"></div>
<div class="c" style="left:752px;top:495px;width:61px;height:30px;background:#d3d3d3;border-color:#b9b9b9"></div>
<div class="c" style="left:681px;top:495px;width:72px;height:30px;background:#d3d3d3;border-color:#b9b9b9"></div>
<div class="c" style="left:647px;top:495px;width:35px;height:30px;background:#d3d3d3;border-color:#b9b9b9"></div>
<div class="c" style="left:610px;top:495px;width:38px;height:30px;background:#d3d3d3;border-color:#b9b9b9"></div>
<div class="c" style="left:550px;top:495px;width:61px;height:30px;background:#d3d3d3;border-color:#b9b9b9"></div>
<div class="c" style="left:482px;top:495px;width:69px;height:30px;background:#d3d3d3;border-color:#b9b9b9"></div>
<div class="c" style="left:445px;top:495px;width:38px;height:30px;background:#d3d3d3;border-color:#b9b9b9"></div>
<div class="c" style="left:406px;top:495px;width:40px;height:30px;background:#d3d3d3;border-color:#b9b9b9"></div>
<div class="c" style="left:346px;top:495px;width:61px;height:30px;background:#d3d3d3;border-color:#b9b9b9"></div>
<div class="c" style="left:275px;top:495px;width:72px;height:30px;background:#d3d3d3;border-color:#b9b9b9"></div>
<div class="c" style="left:238px;top:495px;width:38px;height:30px;background:#d3d3d3;border-color:#b9b9b9"></div>
<div class="c" style="left:199px;top:495px;width:40px;height:30px;background:#d3d3d3;border-color:#b9b9b9"></div>
<div class="c" style="left:140px;top:495px;width:60px;height:30px;background:#d3d3d3;border-color:#b9b9b9"></div>
<div class="c" style="left:73px;top:495px;width:68px;height:30px;background:#d3d3d3;border-color:#b9b9b9"></div>
<div class="c" style="left:15px;top:495px;width:59px;height:30px;background:#d3d3d3;border-color:#b9b9b9"></div>
<div class="c" style="left:1245px;top:524px;width:59px;height:30px;background:#ffe29e;border-color:#b9b9b9"><div class="t" style="left:-600px;right:2px;text-align:right;transform-origin:100% 0;transform:scaleX(0.78);top:2px;line-height:12px;font-size:10px;color:#0f2b5b">جمع درآمد ارائه<br>خدمات</div></div>
<div class="c" style="left:1224px;top:524px;width:22px;height:30px;background:#ffe29e;border-color:#b9b9b9"></div>
<div class="c" style="left:1188px;top:524px;width:37px;height:30px;background:#ffe29e;border-color:#b9b9b9"><div class="t" style="left:-600px;right:3px;text-align:right;transform-origin:100% 0;transform:scaleX(1.0);top:2.5px;line-height:12px;font-size:9px;color:#0f2b5b">-</div></div>
<div class="c" style="left:1149px;top:524px;width:40px;height:30px;background:#ffe29e;border-color:#b9b9b9"><div class="t" style="left:-300px;right:-300px;text-align:center;transform-origin:50% 0;transform:scaleX(1.0);top:2.5px;line-height:12px;font-size:9px;color:#0f2b5b">-</div></div>
<div class="c" style="left:1090px;top:524px;width:60px;height:30px;background:#ffe29e;border-color:#b9b9b9"></div>
<div class="c" style="left:1020px;top:524px;width:71px;height:30px;background:#ffe29e;border-color:#b9b9b9"><div class="t" style="left:-300px;right:-300px;text-align:center;transform-origin:50% 0;transform:scaleX(1.0);top:2.5px;line-height:12px;font-size:9px;color:#0f2b5b">-</div></div>
<div class="c" style="left:987px;top:524px;width:34px;height:30px;background:#ffe29e;border-color:#b9b9b9"><div class="t" style="left:-300px;right:-300px;text-align:center;transform-origin:50% 0;transform:scaleX(1.0);top:2.5px;line-height:12px;font-size:9px;color:#0f2b5b">-</div></div>
<div class="c" style="left:950px;top:524px;width:38px;height:30px;background:#ffe29e;border-color:#b9b9b9"><div class="t" style="left:-300px;right:-300px;text-align:center;transform-origin:50% 0;transform:scaleX(1.0);top:2.5px;line-height:12px;font-size:9px;color:#0f2b5b">-</div></div>
<div class="c" style="left:887px;top:524px;width:64px;height:30px;background:#ffe29e;border-color:#b9b9b9"><div class="t" style="left:-300px;right:-300px;text-align:center;transform-origin:50% 0;transform:scaleX(1.0);top:2.5px;line-height:12px;font-size:9px;color:#0f2b5b">-</div></div>
<div class="c" style="left:851px;top:524px;width:37px;height:30px;background:#ffe29e;border-color:#b9b9b9"><div class="t" style="left:-600px;right:3px;text-align:right;transform-origin:100% 0;transform:scaleX(1.0);top:2.5px;line-height:12px;font-size:9px;color:#0f2b5b">-</div></div>
<div class="c" style="left:812px;top:524px;width:40px;height:30px;background:#ffe29e;border-color:#b9b9b9"><div class="t" style="left:-300px;right:-300px;text-align:center;transform-origin:50% 0;transform:scaleX(1.0);top:2.5px;line-height:12px;font-size:9px;color:#0f2b5b">-</div></div>
<div class="c" style="left:752px;top:524px;width:61px;height:30px;background:#ffe29e;border-color:#b9b9b9"></div>
<div class="c" style="left:681px;top:524px;width:72px;height:30px;background:#ffe29e;border-color:#b9b9b9"><div class="t" style="left:-300px;right:-300px;text-align:center;transform-origin:50% 0;transform:scaleX(1.0);top:2.5px;line-height:12px;font-size:9px;color:#0f2b5b">-</div></div>
<div class="c" style="left:647px;top:524px;width:35px;height:30px;background:#ffe29e;border-color:#b9b9b9"><div class="t" style="left:-600px;right:3px;text-align:right;transform-origin:100% 0;transform:scaleX(1.0);top:2.5px;line-height:12px;font-size:9px;color:#0f2b5b">-</div></div>
<div class="c" style="left:610px;top:524px;width:38px;height:30px;background:#ffe29e;border-color:#b9b9b9"><div class="t" style="left:-300px;right:-300px;text-align:center;transform-origin:50% 0;transform:scaleX(1.0);top:2.5px;line-height:12px;font-size:9px;color:#0f2b5b">-</div></div>
<div class="c" style="left:550px;top:524px;width:61px;height:30px;background:#ffe29e;border-color:#b9b9b9"></div>
<div class="c" style="left:482px;top:524px;width:69px;height:30px;background:#ffe29e;border-color:#b9b9b9"><div class="t" style="left:-300px;right:-300px;text-align:center;transform-origin:50% 0;transform:scaleX(1.0);top:2.5px;line-height:12px;font-size:9px;color:#0f2b5b">-</div></div>
<div class="c" style="left:445px;top:524px;width:38px;height:30px;background:#ffe29e;border-color:#b9b9b9"><div class="t" style="left:-600px;right:3px;text-align:right;transform-origin:100% 0;transform:scaleX(1.0);top:2.5px;line-height:12px;font-size:9px;color:#0f2b5b">-</div></div>
<div class="c" style="left:406px;top:524px;width:40px;height:30px;background:#ffe29e;border-color:#b9b9b9"><div class="t" style="left:-300px;right:-300px;text-align:center;transform-origin:50% 0;transform:scaleX(1.0);top:2.5px;line-height:12px;font-size:9px;color:#0f2b5b">-</div></div>
<div class="c" style="left:346px;top:524px;width:61px;height:30px;background:#ffe29e;border-color:#b9b9b9"></div>
<div class="c" style="left:275px;top:524px;width:72px;height:30px;background:#ffe29e;border-color:#b9b9b9"><div class="t" style="left:-300px;right:-300px;text-align:center;transform-origin:50% 0;transform:scaleX(1.0);top:2.5px;line-height:12px;font-size:9px;color:#0f2b5b">-</div></div>
<div class="c" style="left:238px;top:524px;width:38px;height:30px;background:#ffe29e;border-color:#b9b9b9"><div class="t" style="left:-600px;right:3px;text-align:right;transform-origin:100% 0;transform:scaleX(1.0);top:2.5px;line-height:12px;font-size:9px;color:#0f2b5b">-</div></div>
<div class="c" style="left:199px;top:524px;width:40px;height:30px;background:#ffe29e;border-color:#b9b9b9"><div class="t" style="left:-300px;right:-300px;text-align:center;transform-origin:50% 0;transform:scaleX(1.0);top:2.5px;line-height:12px;font-size:9px;color:#0f2b5b">-</div></div>
<div class="c" style="left:140px;top:524px;width:60px;height:30px;background:#ffe29e;border-color:#b9b9b9"></div>
<div class="c" style="left:73px;top:524px;width:68px;height:30px;background:#ffe29e;border-color:#b9b9b9"><div class="t" style="left:-300px;right:-300px;text-align:center;transform-origin:50% 0;transform:scaleX(1.0);top:2.5px;line-height:12px;font-size:9px;color:#0f2b5b">-</div></div>
<div class="c" style="left:15px;top:524px;width:59px;height:30px;background:#ffe29e;border-color:#b9b9b9"></div>
<div class="c" style="left:1245px;top:553px;width:59px;height:31px;background:#d3d3d3;border-color:#b9b9b9"><div class="t" style="left:-600px;right:2px;text-align:right;transform-origin:100% 0;transform:scaleX(0.74);top:2px;line-height:12px;font-size:10px;font-weight:bold;color:#0f2b5b">برگشت از<br>فروش:</div></div>
<div class="c" style="left:1224px;top:553px;width:22px;height:31px;background:#d3d3d3;border-color:#b9b9b9"></div>
<div class="c" style="left:1188px;top:553px;width:37px;height:31px;background:#d3d3d3;border-color:#b9b9b9"></div>
<div class="c" style="left:1149px;top:553px;width:40px;height:31px;background:#d3d3d3;border-color:#b9b9b9"></div>
<div class="c" style="left:1090px;top:553px;width:60px;height:31px;background:#d3d3d3;border-color:#b9b9b9"></div>
<div class="c" style="left:1020px;top:553px;width:71px;height:31px;background:#d3d3d3;border-color:#b9b9b9"></div>
<div class="c" style="left:987px;top:553px;width:34px;height:31px;background:#d3d3d3;border-color:#b9b9b9"></div>
<div class="c" style="left:950px;top:553px;width:38px;height:31px;background:#d3d3d3;border-color:#b9b9b9"></div>
<div class="c" style="left:887px;top:553px;width:64px;height:31px;background:#d3d3d3;border-color:#b9b9b9"></div>
<div class="c" style="left:851px;top:553px;width:37px;height:31px;background:#d3d3d3;border-color:#b9b9b9"></div>
<div class="c" style="left:812px;top:553px;width:40px;height:31px;background:#d3d3d3;border-color:#b9b9b9"></div>
<div class="c" style="left:752px;top:553px;width:61px;height:31px;background:#d3d3d3;border-color:#b9b9b9"></div>
<div class="c" style="left:681px;top:553px;width:72px;height:31px;background:#d3d3d3;border-color:#b9b9b9"></div>
<div class="c" style="left:647px;top:553px;width:35px;height:31px;background:#d3d3d3;border-color:#b9b9b9"></div>
<div class="c" style="left:610px;top:553px;width:38px;height:31px;background:#d3d3d3;border-color:#b9b9b9"></div>
<div class="c" style="left:550px;top:553px;width:61px;height:31px;background:#d3d3d3;border-color:#b9b9b9"></div>
<div class="c" style="left:482px;top:553px;width:69px;height:31px;background:#d3d3d3;border-color:#b9b9b9"></div>
<div class="c" style="left:445px;top:553px;width:38px;height:31px;background:#d3d3d3;border-color:#b9b9b9"></div>
<div class="c" style="left:406px;top:553px;width:40px;height:31px;background:#d3d3d3;border-color:#b9b9b9"></div>
<div class="c" style="left:346px;top:553px;width:61px;height:31px;background:#d3d3d3;border-color:#b9b9b9"></div>
<div class="c" style="left:275px;top:553px;width:72px;height:31px;background:#d3d3d3;border-color:#b9b9b9"></div>
<div class="c" style="left:238px;top:553px;width:38px;height:31px;background:#d3d3d3;border-color:#b9b9b9"></div>
<div class="c" style="left:199px;top:553px;width:40px;height:31px;background:#d3d3d3;border-color:#b9b9b9"></div>
<div class="c" style="left:140px;top:553px;width:60px;height:31px;background:#d3d3d3;border-color:#b9b9b9"></div>
<div class="c" style="left:73px;top:553px;width:68px;height:31px;background:#d3d3d3;border-color:#b9b9b9"></div>
<div class="c" style="left:15px;top:553px;width:59px;height:31px;background:#d3d3d3;border-color:#b9b9b9"></div>
<div class="c" style="left:1245px;top:584px;width:59px;height:30px;background:#ffe29e;border-color:#b9b9b9"><div class="t" style="left:-600px;right:2px;text-align:right;transform-origin:100% 0;transform:scaleX(0.78);top:2px;line-height:12px;font-size:10px;color:#0f2b5b">جمع برگشت از<br>فروش</div></div>
<div class="c" style="left:1224px;top:584px;width:22px;height:30px;background:#ffe29e;border-color:#b9b9b9"></div>
<div class="c" style="left:1188px;top:584px;width:37px;height:30px;background:#ffe29e;border-color:#b9b9b9"></div>
<div class="c" style="left:1149px;top:584px;width:40px;height:30px;background:#ffe29e;border-color:#b9b9b9"><div class="t" style="left:-300px;right:-300px;text-align:center;transform-origin:50% 0;transform:scaleX(1.0);top:2.5px;line-height:12px;font-size:9px;color:#0f2b5b">-</div></div>
<div class="c" style="left:1090px;top:584px;width:60px;height:30px;background:#ffe29e;border-color:#b9b9b9"></div>
<div class="c" style="left:1020px;top:584px;width:71px;height:30px;background:#ffe29e;border-color:#b9b9b9"><div class="t" style="left:-300px;right:-300px;text-align:center;transform-origin:50% 0;transform:scaleX(1.0);top:2.5px;line-height:12px;font-size:9px;color:#0f2b5b">-</div></div>
<div class="c" style="left:987px;top:584px;width:34px;height:30px;background:#ffe29e;border-color:#b9b9b9"></div>
<div class="c" style="left:950px;top:584px;width:38px;height:30px;background:#ffe29e;border-color:#b9b9b9"><div class="t" style="left:-300px;right:-300px;text-align:center;transform-origin:50% 0;transform:scaleX(1.0);top:2.5px;line-height:12px;font-size:9px;color:#0f2b5b">-</div></div>
<div class="c" style="left:887px;top:584px;width:64px;height:30px;background:#ffe29e;border-color:#b9b9b9"><div class="t" style="left:-300px;right:-300px;text-align:center;transform-origin:50% 0;transform:scaleX(1.0);top:2.5px;line-height:12px;font-size:9px;color:#0f2b5b">-</div></div>
<div class="c" style="left:851px;top:584px;width:37px;height:30px;background:#ffe29e;border-color:#b9b9b9"></div>
<div class="c" style="left:812px;top:584px;width:40px;height:30px;background:#ffe29e;border-color:#b9b9b9"><div class="t" style="left:-300px;right:-300px;text-align:center;transform-origin:50% 0;transform:scaleX(1.0);top:2.5px;line-height:12px;font-size:9px;color:#0f2b5b">-</div></div>
<div class="c" style="left:752px;top:584px;width:61px;height:30px;background:#ffe29e;border-color:#b9b9b9"></div>
<div class="c" style="left:681px;top:584px;width:72px;height:30px;background:#ffe29e;border-color:#b9b9b9"><div class="t" style="left:-300px;right:-300px;text-align:center;transform-origin:50% 0;transform:scaleX(1.0);top:2.5px;line-height:12px;font-size:9px;color:#0f2b5b">-</div></div>
<div class="c" style="left:647px;top:584px;width:35px;height:30px;background:#ffe29e;border-color:#b9b9b9"></div>
<div class="c" style="left:610px;top:584px;width:38px;height:30px;background:#ffe29e;border-color:#b9b9b9"><div class="t" style="left:-300px;right:-300px;text-align:center;transform-origin:50% 0;transform:scaleX(1.0);top:2.5px;line-height:12px;font-size:9px;color:#0f2b5b">-</div></div>
<div class="c" style="left:550px;top:584px;width:61px;height:30px;background:#ffe29e;border-color:#b9b9b9"></div>
<div class="c" style="left:482px;top:584px;width:69px;height:30px;background:#ffe29e;border-color:#b9b9b9"><div class="t" style="left:-300px;right:-300px;text-align:center;transform-origin:50% 0;transform:scaleX(1.0);top:2.5px;line-height:12px;font-size:9px;color:#0f2b5b">-</div></div>
<div class="c" style="left:445px;top:584px;width:38px;height:30px;background:#ffe29e;border-color:#b9b9b9"></div>
<div class="c" style="left:406px;top:584px;width:40px;height:30px;background:#ffe29e;border-color:#b9b9b9"><div class="t" style="left:-300px;right:-300px;text-align:center;transform-origin:50% 0;transform:scaleX(1.0);top:2.5px;line-height:12px;font-size:9px;color:#0f2b5b">-</div></div>
<div class="c" style="left:346px;top:584px;width:61px;height:30px;background:#ffe29e;border-color:#b9b9b9"></div>
<div class="c" style="left:275px;top:584px;width:72px;height:30px;background:#ffe29e;border-color:#b9b9b9"><div class="t" style="left:-300px;right:-300px;text-align:center;transform-origin:50% 0;transform:scaleX(1.0);top:2.5px;line-height:12px;font-size:9px;color:#0f2b5b">-</div></div>
<div class="c" style="left:238px;top:584px;width:38px;height:30px;background:#ffe29e;border-color:#b9b9b9"></div>
<div class="c" style="left:199px;top:584px;width:40px;height:30px;background:#ffe29e;border-color:#b9b9b9"><div class="t" style="left:-300px;right:-300px;text-align:center;transform-origin:50% 0;transform:scaleX(1.0);top:2.5px;line-height:12px;font-size:9px;color:#0f2b5b">-</div></div>
<div class="c" style="left:140px;top:584px;width:60px;height:30px;background:#ffe29e;border-color:#b9b9b9"></div>
<div class="c" style="left:73px;top:584px;width:68px;height:30px;background:#ffe29e;border-color:#b9b9b9"><div class="t" style="left:-300px;right:-300px;text-align:center;transform-origin:50% 0;transform:scaleX(1.0);top:2.5px;line-height:12px;font-size:9px;color:#0f2b5b">-</div></div>
<div class="c" style="left:15px;top:584px;width:59px;height:30px;background:#ffe29e;border-color:#b9b9b9"></div>
<div class="c" style="left:1245px;top:613px;width:59px;height:18px;background:#d2e4f5;border-color:#b9b9b9"><div class="t" style="left:-600px;right:2px;text-align:right;transform-origin:100% 0;transform:scaleX(0.78);top:2px;line-height:12px;font-size:10px;color:#0f2b5b">تخفیفات</div></div>
<div class="c" style="left:1224px;top:613px;width:22px;height:18px;background:#d2e4f5;border-color:#b9b9b9"></div>
<div class="c" style="left:1188px;top:613px;width:37px;height:18px;background:#d3d3d3;border-color:#b9b9b9"></div>
<div class="c" style="left:1149px;top:613px;width:40px;height:18px;background:#d3d3d3;border-color:#b9b9b9"></div>
<div class="c" style="left:1090px;top:613px;width:60px;height:18px;background:#d3d3d3;border-color:#b9b9b9"></div>
<div class="c" style="left:1020px;top:613px;width:71px;height:18px;background:#d2e4f5;border-color:#b9b9b9"><div class="t" style="left:-300px;right:-300px;text-align:center;transform-origin:50% 0;transform:scaleX(1.0);top:2.5px;line-height:12px;font-size:9px;color:#0f2b5b">-</div></div>
<div class="c" style="left:987px;top:613px;width:34px;height:18px;background:#d3d3d3;border-color:#b9b9b9"></div>
<div class="c" style="left:950px;top:613px;width:38px;height:18px;background:#d3d3d3;border-color:#b9b9b9"></div>
<div class="c" style="left:887px;top:613px;width:64px;height:18px;background:#d2e4f5;border-color:#b9b9b9"><div class="t" style="left:-300px;right:-300px;text-align:center;transform-origin:50% 0;transform:scaleX(1.0);top:2.5px;line-height:12px;font-size:9px;color:#0f2b5b">-</div></div>
<div class="c" style="left:851px;top:613px;width:37px;height:18px;background:#d3d3d3;border-color:#b9b9b9"></div>
<div class="c" style="left:812px;top:613px;width:40px;height:18px;background:#d3d3d3;border-color:#b9b9b9"></div>
<div class="c" style="left:752px;top:613px;width:61px;height:18px;background:#d3d3d3;border-color:#b9b9b9"></div>
<div class="c" style="left:681px;top:613px;width:72px;height:18px;background:#d2e4f5;border-color:#b9b9b9"><div class="t" style="left:-300px;right:-300px;text-align:center;transform-origin:50% 0;transform:scaleX(1.0);top:2.5px;line-height:12px;font-size:9px;color:#0f2b5b">-</div></div>
<div class="c" style="left:647px;top:613px;width:35px;height:18px;background:#d3d3d3;border-color:#b9b9b9"></div>
<div class="c" style="left:610px;top:613px;width:38px;height:18px;background:#d3d3d3;border-color:#b9b9b9"></div>
<div class="c" style="left:550px;top:613px;width:61px;height:18px;background:#d3d3d3;border-color:#b9b9b9"></div>
<div class="c" style="left:482px;top:613px;width:69px;height:18px;background:#d2e4f5;border-color:#b9b9b9"><div class="t" style="left:-300px;right:-300px;text-align:center;transform-origin:50% 0;transform:scaleX(1.0);top:2.5px;line-height:12px;font-size:9px;color:#0f2b5b">-</div></div>
<div class="c" style="left:445px;top:613px;width:38px;height:18px;background:#d3d3d3;border-color:#b9b9b9"></div>
<div class="c" style="left:406px;top:613px;width:40px;height:18px;background:#d3d3d3;border-color:#b9b9b9"></div>
<div class="c" style="left:346px;top:613px;width:61px;height:18px;background:#d3d3d3;border-color:#b9b9b9"></div>
<div class="c" style="left:275px;top:613px;width:72px;height:18px;background:#d2e4f5;border-color:#b9b9b9"><div class="t" style="left:-300px;right:-300px;text-align:center;transform-origin:50% 0;transform:scaleX(1.0);top:2.5px;line-height:12px;font-size:9px;color:#0f2b5b">-</div></div>
<div class="c" style="left:238px;top:613px;width:38px;height:18px;background:#d3d3d3;border-color:#b9b9b9"></div>
<div class="c" style="left:199px;top:613px;width:40px;height:18px;background:#d3d3d3;border-color:#b9b9b9"></div>
<div class="c" style="left:140px;top:613px;width:60px;height:18px;background:#d3d3d3;border-color:#b9b9b9"></div>
<div class="c" style="left:73px;top:613px;width:68px;height:18px;background:#d2e4f5;border-color:#b9b9b9"><div class="t" style="left:-300px;right:-300px;text-align:center;transform-origin:50% 0;transform:scaleX(1.0);top:2.5px;line-height:12px;font-size:9px;color:#0f2b5b">-</div></div>
<div class="c" style="left:15px;top:613px;width:59px;height:18px;background:#d2e4f5;border-color:#b9b9b9"></div>
<div class="c" style="left:1245px;top:630px;width:59px;height:18px;background:#ffe29e;border-color:#b9b9b9"><div class="t" style="left:-600px;right:2px;text-align:right;transform-origin:100% 0;transform:scaleX(0.78);top:2px;line-height:12px;font-size:10px;color:#0f2b5b">جمع</div></div>
<div class="c" style="left:1224px;top:630px;width:22px;height:18px;background:#ffe29e;border-color:#b9b9b9"></div>
<div class="c" style="left:1188px;top:630px;width:37px;height:18px;background:#ffe29e;border-color:#b9b9b9"></div>
<div class="c" style="left:1149px;top:630px;width:40px;height:18px;background:#ffe29e;border-color:#b9b9b9"></div>
<div class="c" style="left:1090px;top:630px;width:60px;height:18px;background:#ffe29e;border-color:#b9b9b9"></div>
<div class="c" style="left:1020px;top:630px;width:71px;height:18px;background:#ffe29e;border-color:#b9b9b9"><div class="t" style="left:-300px;right:-300px;text-align:center;transform-origin:50% 0;transform:scaleX(1.0);top:2.5px;line-height:12px;font-size:9px;color:#0f2b5b">۱۰,۴۸۵,۳۷۸</div></div>
<div class="c" style="left:987px;top:630px;width:34px;height:18px;background:#ffe29e;border-color:#b9b9b9"></div>
<div class="c" style="left:950px;top:630px;width:38px;height:18px;background:#ffe29e;border-color:#b9b9b9"></div>
<div class="c" style="left:887px;top:630px;width:64px;height:18px;background:#ffe29e;border-color:#b9b9b9"><div class="t" style="left:-300px;right:-300px;text-align:center;transform-origin:50% 0;transform:scaleX(1.0);top:2.5px;line-height:12px;font-size:9px;color:#0f2b5b">-</div></div>
<div class="c" style="left:851px;top:630px;width:37px;height:18px;background:#ffe29e;border-color:#b9b9b9"></div>
<div class="c" style="left:812px;top:630px;width:40px;height:18px;background:#ffe29e;border-color:#b9b9b9"></div>
<div class="c" style="left:752px;top:630px;width:61px;height:18px;background:#ffe29e;border-color:#b9b9b9"></div>
<div class="c" style="left:681px;top:630px;width:72px;height:18px;background:#ffe29e;border-color:#b9b9b9"><div class="t" style="left:-300px;right:-300px;text-align:center;transform-origin:50% 0;transform:scaleX(1.0);top:2.5px;line-height:12px;font-size:9px;color:#0f2b5b">۱۰,۴۸۵,۳۷۸</div></div>
<div class="c" style="left:647px;top:630px;width:35px;height:18px;background:#ffe29e;border-color:#b9b9b9"></div>
<div class="c" style="left:610px;top:630px;width:38px;height:18px;background:#ffe29e;border-color:#b9b9b9"></div>
<div class="c" style="left:550px;top:630px;width:61px;height:18px;background:#ffe29e;border-color:#b9b9b9"></div>
<div class="c" style="left:482px;top:630px;width:69px;height:18px;background:#ffe29e;border-color:#b9b9b9"><div class="t" style="left:-300px;right:-300px;text-align:center;transform-origin:50% 0;transform:scaleX(1.0);top:2.5px;line-height:12px;font-size:9px;color:#0f2b5b">۱,۸۵۰,۳۹۳</div></div>
<div class="c" style="left:445px;top:630px;width:38px;height:18px;background:#ffe29e;border-color:#b9b9b9"></div>
<div class="c" style="left:406px;top:630px;width:40px;height:18px;background:#ffe29e;border-color:#b9b9b9"></div>
<div class="c" style="left:346px;top:630px;width:61px;height:18px;background:#ffe29e;border-color:#b9b9b9"></div>
<div class="c" style="left:275px;top:630px;width:72px;height:18px;background:#ffe29e;border-color:#b9b9b9"><div class="t" style="left:-300px;right:-300px;text-align:center;transform-origin:50% 0;transform:scaleX(1.0);top:2.5px;line-height:12px;font-size:9px;color:#0f2b5b">۱۳,۳۳۵,۶۷۰</div></div>
<div class="c" style="left:238px;top:630px;width:38px;height:18px;background:#ffe29e;border-color:#b9b9b9"></div>
<div class="c" style="left:199px;top:630px;width:40px;height:18px;background:#ffe29e;border-color:#b9b9b9"></div>
<div class="c" style="left:140px;top:630px;width:60px;height:18px;background:#ffe29e;border-color:#b9b9b9"></div>
<div class="c" style="left:73px;top:630px;width:68px;height:18px;background:#ffe29e;border-color:#b9b9b9"><div class="t" style="left:-300px;right:-300px;text-align:center;transform-origin:50% 0;transform:scaleX(1.0);top:2.5px;line-height:12px;font-size:9px;color:#0f2b5b">۹,۰۸۱,۶۳۳</div></div>
<div class="c" style="left:15px;top:630px;width:59px;height:18px;background:#ffe29e;border-color:#b9b9b9"></div>
<div class="c" style="left:1247px;top:677px;width:57px;height:60px;background:#0096c8;border-color:#b9b9b9"><div class="t" style="left:-300px;right:-300px;text-align:center;transform-origin:50% 0;transform:scaleX(0.79);top:2px;line-height:12px;font-size:10px;font-weight:bold;color:#fff">صنعت</div></div>
<div class="c" style="left:1209px;top:677px;width:39px;height:60px;background:#0096c8;border-color:#b9b9b9"><div class="t" style="left:-300px;right:-300px;text-align:center;transform-origin:50% 0;transform:scaleX(0.79);top:2px;line-height:12px;font-size:10px;font-weight:bold;color:#fff">طبقه<br>بندی</div></div>
<div class="c" style="left:1174px;top:677px;width:36px;height:60px;background:#0096c8;border-color:#b9b9b9"><div class="t" style="left:-300px;right:-300px;text-align:center;transform-origin:50% 0;transform:scaleX(0.79);top:2px;line-height:12px;font-size:10px;font-weight:bold;color:#fff">نوع<br>انرژی</div></div>
<div class="c" style="left:1121px;top:677px;width:54px;height:60px;background:#0096c8;border-color:#b9b9b9"><div class="t" style="left:-300px;right:-300px;text-align:center;transform-origin:50% 0;transform:scaleX(0.79);top:2px;line-height:12px;font-size:10px;font-weight:bold;color:#fff">واحد اندازه<br>گیری</div></div>
<div class="c" style="left:977px;top:677px;width:145px;height:30px;background:#0096c8;border-color:#b9b9b9"><div class="t" style="left:-300px;right:-300px;text-align:center;transform-origin:50% 0;transform:scaleX(0.79);top:2px;line-height:12px;font-size:10px;font-weight:bold;color:#fff">از ابتدای سال مالي تا تاريخ<br>۱۴۰۳/۰۱/۳۱</div></div>
<div class="c" style="left:850px;top:677px;width:128px;height:30px;background:#0096c8;border-color:#b9b9b9"><div class="t" style="left:-300px;right:-300px;text-align:center;transform-origin:50% 0;transform:scaleX(0.79);top:2px;line-height:12px;font-size:10px;font-weight:bold;color:#fff">اصلاحات</div></div>
<div class="c" style="left:677px;top:677px;width:174px;height:30px;background:#0096c8;border-color:#b9b9b9"><div class="t" style="left:-300px;right:-300px;text-align:center;transform-origin:50% 0;transform:scaleX(0.79);top:2px;line-height:12px;font-size:10px;font-weight:bold;color:#fff">از ابتدای سال مالي تا تاريخ ۱۴۰۳/۰۱/۳۱<br>(اصلاح شده)</div></div>
<div class="c" style="left:537px;top:677px;width:141px;height:30px;background:#0096c8;border-color:#b9b9b9"><div class="t" style="left:-300px;right:-300px;text-align:center;transform-origin:50% 0;transform:scaleX(0.79);top:2px;line-height:12px;font-size:10px;font-weight:bold;color:#fff">دوره یک ماهه منتهي به<br>۱۴۰۳/۰۲/۳۱</div></div>
<div class="c" style="left:392px;top:677px;width:146px;height:30px;background:#0096c8;border-color:#b9b9b9"><div class="t" style="left:-300px;right:-300px;text-align:center;transform-origin:50% 0;transform:scaleX(0.79);top:2px;line-height:12px;font-size:10px;font-weight:bold;color:#fff">از ابتدای سال مالي تا تاريخ<br>۱۴۰۳/۰۲/۳۱</div></div>
<div class="c" style="left:274px;top:677px;width:119px;height:30px;background:#0096c8;border-color:#b9b9b9"><div class="t" style="left:-300px;right:-300px;text-align:center;transform-origin:50% 0;transform:scaleX(0.79);top:2px;line-height:12px;font-size:10px;font-weight:bold;color:#fff">از ابتدای سال مالي تا تاريخ<br>۱۴۰۲/۰۲/۳۱</div></div>
<div class="c" style="left:134px;top:677px;width:141px;height:30px;background:#0096c8;border-color:#b9b9b9"><div class="t" style="left:-300px;right:-300px;text-align:center;transform-origin:50% 0;transform:scaleX(0.79);top:2px;line-height:12px;font-size:10px;font-weight:bold;color:#fff">مانده پیش بینی تا انتهای سال<br>مالي ۱۴۰۳/۰۶/۳۱</div></div>
<div class="c" style="left:15px;top:677px;width:120px;height:60px;background:#0096c8;border-color:#b9b9b9"><div class="t" style="left:-300px;right:-300px;text-align:center;transform-origin:50% 0;transform:scaleX(0.79);top:2px;line-height:12px;font-size:10px;font-weight:bold;color:#fff">توضیحات در خصوص علت<br>تغییر میزان مصرف</div></div>
<div class="c" style="left:1073px;top:706px;width:49px;height:31px;background:#0096c8;border-color:#b9b9b9"><div class="t" style="left:-300px;right:-300px;text-align:center;transform-origin:50% 0;transform:scaleX(0.79);top:2px;line-height:12px;font-size:10px;font-weight:bold;color:#fff">مقدار<br>مصرف</div></div>
<div class="c" style="left:1030px;top:706px;width:44px;height:31px;background:#0096c8;border-color:#b9b9b9"><div class="t" style="left:-300px;right:-300px;text-align:center;transform-origin:50% 0;transform:scaleX(0.79);top:2px;line-height:12px;font-size:10px;font-weight:bold;color:#fff">نرخ - ريال</div></div>
<div class="c" style="left:977px;top:706px;width:54px;height:31px;background:#0096c8;border-color:#b9b9b9"><div class="t" style="left:-300px;right:-300px;text-align:center;transform-origin:50% 0;transform:scaleX(0.79);top:2px;line-height:12px;font-size:10px;font-weight:bold;color:#fff">مبلغ - میلیون<br>ريال</div></div>
<div class="c" style="left:934px;top:706px;width:44px;height:31px;background:#0096c8;border-color:#b9b9b9"><div class="t" style="left:-300px;right:-300px;text-align:center;transform-origin:50% 0;transform:scaleX(0.79);top:2px;line-height:12px;font-size:10px;font-weight:bold;color:#fff">مقدار<br>مصرف</div></div>
<div class="c" style="left:903px;top:706px;width:32px;height:31px;background:#0096c8;border-color:#b9b9b9"><div class="t" style="left:-300px;right:-300px;text-align:center;transform-origin:50% 0;transform:scaleX(0.79);top:2px;line-height:12px;font-size:10px;font-weight:bold;color:#fff">نرخ -<br>ريال</div></div>
<div class="c" style="left:850px;top:706px;width:54px;height:31px;background:#0096c8;border-color:#b9b9b9"><div class="t" style="left:-300px;right:-300px;text-align:center;transform-origin:50% 0;transform:scaleX(0.79);top:2px;line-height:12px;font-size:10px;font-weight:bold;color:#fff">مبلغ - میلیون<br>ريال</div></div>
<div class="c" style="left:793px;top:706px;width:58px;height:31px;background:#0096c8;border-color:#b9b9b9"><div class="t" style="left:-300px;right:-300px;text-align:center;transform-origin:50% 0;transform:scaleX(0.79);top:2px;line-height:12px;font-size:10px;font-weight:bold;color:#fff">مقدار مصرف</div></div>
<div class="c" style="left:742px;top:706px;width:52px;height:31px;background:#0096c8;border-color:#b9b9b9"><div class="t" style="left:-300px;right:-300px;text-align:center;transform-origin:50% 0;transform:scaleX(0.79);top:2px;line-height:12px;font-size:10px;font-weight:bold;color:#fff">نرخ - ريال</div></div>
<div class="c" style="left:677px;top:706px;width:66px;height:31px;background:#0096c8;border-color:#b9b9b9"><div class="t" style="left:-300px;right:-300px;text-align:center;transform-origin:50% 0;transform:scaleX(0.79);top:2px;line-height:12px;font-size:10px;font-weight:bold;color:#fff">مبلغ - میلیون<br>ريال</div></div>
<div class="c" style="left:633px;top:706px;width:45px;height:31px;background:#0096c8;border-color:#b9b9b9"><div class="t" style="left:-300px;right:-300px;text-align:center;transform-origin:50% 0;transform:scaleX(0.79);top:2px;line-height:12px;font-size:10px;font-weight:bold;color:#fff">مقدار<br>مصرف</div></div>
<div class="c" style="left:590px;top:706px;width:44px;height:31px;background:#0096c8;border-color:#b9b9b9"><div class="t" style="left:-300px;right:-300px;text-align:center;transform-origin:50% 0;transform:scaleX(0.79);top:2px;line-height:12px;font-size:10px;font-weight:bold;color:#fff">نرخ - ريال</div></div>
<div class="c" style="left:537px;top:706px;width:54px;height:31px;background:#0096c8;border-color:#b9b9b9"><div class="t" style="left:-300px;right:-300px;text-align:center;transform-origin:50% 0;transform:scaleX(0.79);top:2px;line-height:12px;font-size:10px;font-weight:bold;color:#fff">مبلغ - میلیون<br>ريال</div></div>
<div class="c" style="left:489px;top:706px;width:49px;height:31px;background:#0096c8;border-color:#b9b9b9"><div class="t" style="left:-300px;right:-300px;text-align:center;transform-origin:50% 0;transform:scaleX(0.79);top:2px;line-height:12px;font-size:10px;font-weight:bold;color:#fff">مقدار<br>مصرف</div></div>
<div class="c" style="left:446px;top:706px;width:44px;height:31px;background:#0096c8;border-color:#b9b9b9"><div class="t" style="left:-300px;right:-300px;text-align:center;transform-origin:50% 0;transform:scaleX(0.79);top:2px;line-height:12px;font-size:10px;font-weight:bold;color:#fff">نرخ - ريال</div></div>
<div class="c" style="left:392px;top:706px;width:55px;height:31px;background:#0096c8;border-color:#b9b9b9"><div class="t" style="left:-300px;right:-300px;text-align:center;transform-origin:50% 0;transform:scaleX(0.79);top:2px;line-height:12px;font-size:10px;font-weight:bold;color:#fff">مبلغ - میلیون<br>ريال</div></div>
<div class="c" style="left:326px;top:706px;width:67px;height:31px;background:#0096c8;border-color:#b9b9b9"><div class="t" style="left:-300px;right:-300px;text-align:center;transform-origin:50% 0;transform:scaleX(0.79);top:2px;line-height:12px;font-size:10px;font-weight:bold;color:#fff">مقدار</div></div>
<div class="c" style="left:274px;top:706px;width:53px;height:31px;background:#0096c8;border-color:#b9b9b9"><div class="t" style="left:-300px;right:-300px;text-align:center;transform-origin:50% 0;transform:scaleX(0.79);top:2px;line-height:12px;font-size:10px;font-weight:bold;color:#fff">مبلغ</div></div>
<div class="c" style="left:134px;top:706px;width:141px;height:31px;background:#0096c8;border-color:#b9b9b9"><div class="t" style="left:-300px;right:-300px;text-align:center;transform-origin:50% 0;transform:scaleX(0.79);top:2px;line-height:12px;font-size:10px;font-weight:bold;color:#fff">مقدار مصرف</div></div>
<div class="c" style="left:1247px;top:736px;width:57px;height:30px;background:#eeeeee;border-color:#b9b9b9"><div class="t" style="left:-600px;right:2px;text-align:right;transform-origin:100% 0;transform:scaleX(0.78);top:2px;line-height:12px;font-size:10px;color:#0f2b5b">محصولات<br>شیمیایی</div></div>
<div class="c" style="left:1209px;top:736px;width:39px;height:30px;background:#eeeeee;border-color:#b9b9b9"><div class="t" style="left:-600px;right:2px;text-align:right;transform-origin:100% 0;transform:scaleX(0.78);top:2px;line-height:12px;font-size:10px;color:#0f2b5b">سوخت</div></div>
<div class="c" style="left:1174px;top:736px;width:36px;height:30px;background:#eeeeee;border-color:#b9b9b9"><div class="t" style="left:-600px;right:2px;text-align:right;transform-origin:100% 0;transform:scaleX(0.78);top:2px;line-height:12px;font-size:10px;color:#0f2b5b">گاز</div></div>
<div class="c" style="left:1121px;top:736px;width:54px;height:30px;background:#eeeeee;border-color:#b9b9b9"><div class="t" style="left:-600px;right:2px;text-align:right;transform-origin:100% 0;transform:scaleX(0.78);top:2px;line-height:12px;font-size:10px;color:#0f2b5b">مترمکعب</div></div>
<div class="c" style="left:1073px;top:736px;width:49px;height:30px;background:#eeeeee;border-color:#b9b9b9"><div class="t" style="left:-300px;right:-300px;text-align:center;transform-origin:50% 0;transform:scaleX(1.0);top:2.5px;line-height:12px;font-size:9px;color:#0f2b5b">۳,۰۸۸,۷۳۰</div></div>
<div class="c" style="left:1030px;top:736px;width:44px;height:30px;background:#eeeeee;border-color:#b9b9b9"><div class="t" style="left:-300px;right:-300px;text-align:center;transform-origin:50% 0;transform:scaleX(1.0);top:2.5px;line-height:12px;font-size:9px;color:#0f2b5b">۸,۹۳۳</div></div>
<div class="c" style="left:977px;top:736px;width:54px;height:30px;background:#eeeeee;border-color:#b9b9b9"><div class="t" style="left:-300px;right:-300px;text-align:center;transform-origin:50% 0;transform:scaleX(1.0);top:2.5px;line-height:12px;font-size:9px;color:#0f2b5b">۲۷,۵۸۹</div></div>
<div class="c" style="left:934px;top:736px;width:44px;height:30px;background:#eeeeee;border-color:#b9b9b9"><div class="t" style="left:-300px;right:-300px;text-align:center;transform-origin:50% 0;transform:scaleX(1.0);top:2.5px;line-height:12px;font-size:9px;color:#0f2b5b">-</div></div>
<div class="c" style="left:903px;top:736px;width:32px;height:30px;background:#eeeeee;border-color:#b9b9b9"><div class="t" style="left:-300px;right:-300px;text-align:center;transform-origin:50% 0;transform:scaleX(1.0);top:2.5px;line-height:12px;font-size:9px;color:#0f2b5b">-</div></div>
<div class="c" style="left:850px;top:736px;width:54px;height:30px;background:#eeeeee;border-color:#b9b9b9"><div class="t" style="left:-300px;right:-300px;text-align:center;transform-origin:50% 0;transform:scaleX(1.0);top:2.5px;line-height:12px;font-size:9px;color:#0f2b5b">-</div></div>
<div class="c" style="left:793px;top:736px;width:58px;height:30px;background:#eeeeee;border-color:#b9b9b9"><div class="t" style="left:-300px;right:-300px;text-align:center;transform-origin:50% 0;transform:scaleX(1.0);top:2.5px;line-height:12px;font-size:9px;color:#0f2b5b">۳,۰۸۸,۷۳۰</div></div>
<div class="c" style="left:742px;top:736px;width:52px;height:30px;background:#eeeeee;border-color:#b9b9b9"><div class="t" style="left:-300px;right:-300px;text-align:center;transform-origin:50% 0;transform:scaleX(1.0);top:2.5px;line-height:12px;font-size:9px;color:#0f2b5b">۸,۹۳۳</div></div>
<div class="c" style="left:677px;top:736px;width:66px;height:30px;background:#eeeeee;border-color:#b9b9b9"><div class="t" style="left:-300px;right:-300px;text-align:center;transform-origin:50% 0;transform:scaleX(1.0);top:2.5px;line-height:12px;font-size:9px;color:#0f2b5b">۲۷,۵۸۹</div></div>
<div class="c" style="left:633px;top:736px;width:45px;height:30px;background:#eeeeee;border-color:#b9b9b9"><div class="t" style="left:-300px;right:-300px;text-align:center;transform-origin:50% 0;transform:scaleX(1.0);top:2.5px;line-height:12px;font-size:9px;color:#0f2b5b">۷۶,۱۴۷</div></div>
<div class="c" style="left:590px;top:736px;width:44px;height:30px;background:#eeeeee;border-color:#b9b9b9"><div class="t" style="left:-300px;right:-300px;text-align:center;transform-origin:50% 0;transform:scaleX(1.0);top:2.5px;line-height:12px;font-size:9px;color:#0f2b5b">۵,۹۷۵</div></div>
<div class="c" style="left:537px;top:736px;width:54px;height:30px;background:#eeeeee;border-color:#b9b9b9"><div class="t" style="left:-300px;right:-300px;text-align:center;transform-origin:50% 0;transform:scaleX(1.0);top:2.5px;line-height:12px;font-size:9px;color:#0f2b5b">۴۵۵</div></div>
<div class="c" style="left:489px;top:736px;width:49px;height:30px;background:#eeeeee;border-color:#b9b9b9"><div class="t" style="left:-300px;right:-300px;text-align:center;transform-origin:50% 0;transform:scaleX(1.0);top:2.5px;line-height:12px;font-size:9px;color:#0f2b5b">۳,۱۶۴,۸۶۷</div></div>
<div class="c" style="left:446px;top:736px;width:44px;height:30px;background:#eeeeee;border-color:#b9b9b9"><div class="t" style="left:-300px;right:-300px;text-align:center;transform-origin:50% 0;transform:scaleX(1.0);top:2.5px;line-height:12px;font-size:9px;color:#0f2b5b">۸,۸۶۱</div></div>
<div class="c" style="left:392px;top:736px;width:55px;height:30px;background:#eeeeee;border-color:#b9b9b9"><div class="t" style="left:-300px;right:-300px;text-align:center;transform-origin:50% 0;transform:scaleX(1.0);top:2.5px;line-height:12px;font-size:9px;color:#0f2b5b">۲۸,۰۴۴</div></div>
<div class="c" style="left:326px;top:736px;width:67px;height:30px;background:#eeeeee;border-color:#b9b9b9"><div class="t" style="left:-300px;right:-300px;text-align:center;transform-origin:50% 0;transform:scaleX(1.0);top:2.5px;line-height:12px;font-size:9px;color:#0f2b5b">-</div></div>
<div class="c" style="left:274px;top:736px;width:53px;height:30px;background:#eeeeee;border-color:#b9b9b9"><div class="t" style="left:-300px;right:-300px;text-align:center;transform-origin:50% 0;transform:scaleX(1.0);top:2.5px;line-height:12px;font-size:9px;color:#0f2b5b">-</div></div>
<div class="c" style="left:134px;top:736px;width:141px;height:30px;background:#eeeeee;border-color:#b9b9b9"><div class="t" style="left:-300px;right:-300px;text-align:center;transform-origin:50% 0;transform:scaleX(1.0);top:2.5px;line-height:12px;font-size:9px;color:#0f2b5b">-</div></div>
<div class="c" style="left:15px;top:736px;width:120px;height:30px;background:#eeeeee;border-color:#b9b9b9"></div>
<div class="c" style="left:1247px;top:765px;width:57px;height:30px;background:#d2e4f5;border-color:#b9b9b9"><div class="t" style="left:-600px;right:2px;text-align:right;transform-origin:100% 0;transform:scaleX(0.78);top:2px;line-height:12px;font-size:10px;color:#0f2b5b">محصولات<br>شیمیایی</div></div>
<div class="c" style="left:1209px;top:765px;width:39px;height:30px;background:#d2e4f5;border-color:#b9b9b9"><div class="t" style="left:-600px;right:2px;text-align:right;transform-origin:100% 0;transform:scaleX(0.78);top:2px;line-height:12px;font-size:10px;color:#0f2b5b">سوخت</div></div>
<div class="c" style="left:1174px;top:765px;width:36px;height:30px;background:#d2e4f5;border-color:#b9b9b9"><div class="t" style="left:-600px;right:2px;text-align:right;transform-origin:100% 0;transform:scaleX(0.78);top:2px;line-height:12px;font-size:10px;color:#0f2b5b">برق</div></div>
<div class="c" style="left:1121px;top:765px;width:54px;height:30px;background:#d2e4f5;border-color:#b9b9b9"><div class="t" style="left:-600px;right:2px;text-align:right;transform-origin:100% 0;transform:scaleX(0.78);top:2px;line-height:12px;font-size:10px;color:#0f2b5b">مگاوات ساعت</div></div>
<div class="c" style="left:1073px;top:765px;width:49px;height:30px;background:#d2e4f5;border-color:#b9b9b9"><div class="t" style="left:-300px;right:-300px;text-align:center;transform-origin:50% 0;transform:scaleX(1.0);top:2.5px;line-height:12px;font-size:9px;color:#0f2b5b">۱۱,۳۴۸</div></div>
<div class="c" style="left:1030px;top:765px;width:44px;height:30px;background:#d2e4f5;border-color:#b9b9b9"><div class="t" style="left:-300px;right:-300px;text-align:center;transform-origin:50% 0;transform:scaleX(1.0);top:2.5px;line-height:12px;font-size:9px;color:#0f2b5b">۱,۷۳۶,۱۱۹</div></div>
<div class="c" style="left:977px;top:765px;width:54px;height:30px;background:#d2e4f5;border-color:#b9b9b9"><div class="t" style="left:-300px;right:-300px;text-align:center;transform-origin:50% 0;transform:scaleX(1.0);top:2.5px;line-height:12px;font-size:9px;color:#0f2b5b">۱۹,۵۸۸</div></div>
<div class="c" style="left:934px;top:765px;width:44px;height:30px;background:#d2e4f5;border-color:#b9b9b9"><div class="t" style="left:-300px;right:-300px;text-align:center;transform-origin:50% 0;transform:scaleX(1.0);top:2.5px;line-height:12px;font-size:9px;color:#0f2b5b">-</div></div>
<div class="c" style="left:903px;top:765px;width:32px;height:30px;background:#d2e4f5;border-color:#b9b9b9"><div class="t" style="left:-300px;right:-300px;text-align:center;transform-origin:50% 0;transform:scaleX(1.0);top:2.5px;line-height:12px;font-size:9px;color:#0f2b5b">-</div></div>
<div class="c" style="left:850px;top:765px;width:54px;height:30px;background:#d2e4f5;border-color:#b9b9b9"><div class="t" style="left:-300px;right:-300px;text-align:center;transform-origin:50% 0;transform:scaleX(1.0);top:2.5px;line-height:12px;font-size:9px;color:#0f2b5b">-</div></div>
<div class="c" style="left:793px;top:765px;width:58px;height:30px;background:#d2e4f5;border-color:#b9b9b9"><div class="t" style="left:-300px;right:-300px;text-align:center;transform-origin:50% 0;transform:scaleX(1.0);top:2.5px;line-height:12px;font-size:9px;color:#0f2b5b">۱۱,۳۴۸</div></div>
<div class="c" style="left:742px;top:765px;width:52px;height:30px;background:#d2e4f5;border-color:#b9b9b9"><div class="t" style="left:-300px;right:-300px;text-align:center;transform-origin:50% 0;transform:scaleX(1.0);top:2.5px;line-height:12px;font-size:9px;color:#0f2b5b">۱,۷۳۶,۱۱۹</div></div>
<div class="c" style="left:677px;top:765px;width:66px;height:30px;background:#d2e4f5;border-color:#b9b9b9"><div class="t" style="left:-300px;right:-300px;text-align:center;transform-origin:50% 0;transform:scaleX(1.0);top:2.5px;line-height:12px;font-size:9px;color:#0f2b5b">۱۹,۵۸۸</div></div>
<div class="c" style="left:633px;top:765px;width:45px;height:30px;background:#d2e4f5;border-color:#b9b9b9"><div class="t" style="left:-300px;right:-300px;text-align:center;transform-origin:50% 0;transform:scaleX(1.0);top:2.5px;line-height:12px;font-size:9px;color:#0f2b5b">۱,۱۸۰</div></div>
<div class="c" style="left:590px;top:765px;width:44px;height:30px;background:#d2e4f5;border-color:#b9b9b9"><div class="t" style="left:-300px;right:-300px;text-align:center;transform-origin:50% 0;transform:scaleX(1.0);top:2.5px;line-height:12px;font-size:9px;color:#0f2b5b">۳,۸۱۴,۴۰۷</div></div>
<div class="c" style="left:537px;top:765px;width:54px;height:30px;background:#d2e4f5;border-color:#b9b9b9"><div class="t" style="left:-300px;right:-300px;text-align:center;transform-origin:50% 0;transform:scaleX(1.0);top:2.5px;line-height:12px;font-size:9px;color:#0f2b5b">۴,۵۰۱</div></div>
<div class="c" style="left:489px;top:765px;width:49px;height:30px;background:#d2e4f5;border-color:#b9b9b9"><div class="t" style="left:-300px;right:-300px;text-align:center;transform-origin:50% 0;transform:scaleX(1.0);top:2.5px;line-height:12px;font-size:9px;color:#0f2b5b">۱۲,۵۲۸</div></div>
<div class="c" style="left:446px;top:765px;width:44px;height:30px;background:#d2e4f5;border-color:#b9b9b9"><div class="t" style="left:-300px;right:-300px;text-align:center;transform-origin:50% 0;transform:scaleX(1.0);top:2.5px;line-height:12px;font-size:9px;color:#0f2b5b">۱,۹۳۳,۸۱۳</div></div>
<div class="c" style="left:392px;top:765px;width:55px;height:30px;background:#d2e4f5;border-color:#b9b9b9"><div class="t" style="left:-300px;right:-300px;text-align:center;transform-origin:50% 0;transform:scaleX(1.0);top:2.5px;line-height:12px;font-size:9px;color:#0f2b5b">۲۴,۰۸۹</div></div>
<div class="c" style="left:326px;top:765px;width:67px;height:30px;background:#d2e4f5;border-color:#b9b9b9"><div class="t" style="left:-300px;right:-300px;text-align:center;transform-origin:50% 0;transform:scaleX(1.0);top:2.5px;line-height:12px;font-size:9px;color:#0f2b5b">-</div></div>
<div class="c" style="left:274px;top:765px;width:53px;height:30px;background:#d2e4f5;border-color:#b9b9b9"><div class="t" style="left:-300px;right:-300px;text-align:center;transform-origin:50% 0;transform:scaleX(1.0);top:2.5px;line-height:12px;font-size:9px;color:#0f2b5b">-</div></div>
<div class="c" style="left:134px;top:765px;width:141px;height:30px;background:#d2e4f5;border-color:#b9b9b9"><div class="t" style="left:-300px;right:-300px;text-align:center;transform-origin:50% 0;transform:scaleX(1.0);top:2.5px;line-height:12px;font-size:9px;color:#0f2b5b">-</div></div>
<div class="c" style="left:15px;top:765px;width:120px;height:30px;background:#d2e4f5;border-color:#b9b9b9"></div>
<div class="c" style="left:1247px;top:794px;width:57px;height:30px;background:#eeeeee;border-color:#b9b9b9"><div class="t" style="left:-600px;right:2px;text-align:right;transform-origin:100% 0;transform:scaleX(0.78);top:2px;line-height:12px;font-size:10px;color:#0f2b5b">محصولات<br>شیمیایی</div></div>
<div class="c" style="left:1209px;top:794px;width:39px;height:30px;background:#eeeeee;border-color:#b9b9b9"><div class="t" style="left:-600px;right:2px;text-align:right;transform-origin:100% 0;transform:scaleX(0.78);top:2px;line-height:12px;font-size:10px;color:#0f2b5b">سوخت</div></div>
<div class="c" style="left:1174px;top:794px;width:36px;height:30px;background:#eeeeee;border-color:#b9b9b9"><div class="t" style="left:-600px;right:2px;text-align:right;transform-origin:100% 0;transform:scaleX(0.78);top:2px;line-height:12px;font-size:10px;color:#0f2b5b">آب</div></div>
<div class="c" style="left:1121px;top:794px;width:54px;height:30px;background:#eeeeee;border-color:#b9b9b9"><div class="t" style="left:-600px;right:2px;text-align:right;transform-origin:100% 0;transform:scaleX(0.78);top:2px;line-height:12px;font-size:10px;color:#0f2b5b">مترمکعب</div></div>
<div class="c" style="left:1073px;top:794px;width:49px;height:30px;background:#eeeeee;border-color:#b9b9b9"><div class="t" style="left:-300px;right:-300px;text-align:center;transform-origin:50% 0;transform:scaleX(1.0);top:2.5px;line-height:12px;font-size:9px;color:#0f2b5b">-</div></div>
<div class="c" style="left:1030px;top:794px;width:44px;height:30px;background:#eeeeee;border-color:#b9b9b9"><div class="t" style="left:-300px;right:-300px;text-align:center;transform-origin:50% 0;transform:scaleX(1.0);top:2.5px;line-height:12px;font-size:9px;color:#0f2b5b">-</div></div>
<div class="c" style="left:977px;top:794px;width:54px;height:30px;background:#eeeeee;border-color:#b9b9b9"><div class="t" style="left:-300px;right:-300px;text-align:center;transform-origin:50% 0;transform:scaleX(1.0);top:2.5px;line-height:12px;font-size:9px;color:#0f2b5b">-</div></div>
<div class="c" style="left:934px;top:794px;width:44px;height:30px;background:#eeeeee;border-color:#b9b9b9"><div class="t" style="left:-300px;right:-300px;text-align:center;transform-origin:50% 0;transform:scaleX(1.0);top:2.5px;line-height:12px;font-size:9px;color:#0f2b5b">-</div></div>
<div class="c" style="left:903px;top:794px;width:32px;height:30px;background:#eeeeee;border-color:#b9b9b9"><div class="t" style="left:-300px;right:-300px;text-align:center;transform-origin:50% 0;transform:scaleX(1.0);top:2.5px;line-height:12px;font-size:9px;color:#0f2b5b">-</div></div>
<div class="c" style="left:850px;top:794px;width:54px;height:30px;background:#eeeeee;border-color:#b9b9b9"><div class="t" style="left:-300px;right:-300px;text-align:center;transform-origin:50% 0;transform:scaleX(1.0);top:2.5px;line-height:12px;font-size:9px;color:#0f2b5b">-</div></div>
<div class="c" style="left:793px;top:794px;width:58px;height:30px;background:#eeeeee;border-color:#b9b9b9"><div class="t" style="left:-300px;right:-300px;text-align:center;transform-origin:50% 0;transform:scaleX(1.0);top:2.5px;line-height:12px;font-size:9px;color:#0f2b5b">-</div></div>
<div class="c" style="left:742px;top:794px;width:52px;height:30px;background:#eeeeee;border-color:#b9b9b9"><div class="t" style="left:-300px;right:-300px;text-align:center;transform-origin:50% 0;transform:scaleX(1.0);top:2.5px;line-height:12px;font-size:9px;color:#0f2b5b">-</div></div>
<div class="c" style="left:677px;top:794px;width:66px;height:30px;background:#eeeeee;border-color:#b9b9b9"><div class="t" style="left:-300px;right:-300px;text-align:center;transform-origin:50% 0;transform:scaleX(1.0);top:2.5px;line-height:12px;font-size:9px;color:#0f2b5b">-</div></div>
<div class="c" style="left:633px;top:794px;width:45px;height:30px;background:#eeeeee;border-color:#b9b9b9"><div class="t" style="left:-300px;right:-300px;text-align:center;transform-origin:50% 0;transform:scaleX(1.0);top:2.5px;line-height:12px;font-size:9px;color:#0f2b5b">-</div></div>
<div class="c" style="left:590px;top:794px;width:44px;height:30px;background:#eeeeee;border-color:#b9b9b9"><div class="t" style="left:-300px;right:-300px;text-align:center;transform-origin:50% 0;transform:scaleX(1.0);top:2.5px;line-height:12px;font-size:9px;color:#0f2b5b">-</div></div>
<div class="c" style="left:537px;top:794px;width:54px;height:30px;background:#eeeeee;border-color:#b9b9b9"><div class="t" style="left:-300px;right:-300px;text-align:center;transform-origin:50% 0;transform:scaleX(1.0);top:2.5px;line-height:12px;font-size:9px;color:#0f2b5b">-</div></div>
<div class="c" style="left:489px;top:794px;width:49px;height:30px;background:#eeeeee;border-color:#b9b9b9"><div class="t" style="left:-300px;right:-300px;text-align:center;transform-origin:50% 0;transform:scaleX(1.0);top:2.5px;line-height:12px;font-size:9px;color:#0f2b5b">-</div></div>
<div class="c" style="left:446px;top:794px;width:44px;height:30px;background:#eeeeee;border-color:#b9b9b9"><div class="t" style="left:-300px;right:-300px;text-align:center;transform-origin:50% 0;transform:scaleX(1.0);top:2.5px;line-height:12px;font-size:9px;color:#0f2b5b">-</div></div>
<div class="c" style="left:392px;top:794px;width:55px;height:30px;background:#eeeeee;border-color:#b9b9b9"><div class="t" style="left:-300px;right:-300px;text-align:center;transform-origin:50% 0;transform:scaleX(1.0);top:2.5px;line-height:12px;font-size:9px;color:#0f2b5b">-</div></div>
<div class="c" style="left:326px;top:794px;width:67px;height:30px;background:#eeeeee;border-color:#b9b9b9"><div class="t" style="left:-300px;right:-300px;text-align:center;transform-origin:50% 0;transform:scaleX(1.0);top:2.5px;line-height:12px;font-size:9px;color:#0f2b5b">-</div></div>
<div class="c" style="left:274px;top:794px;width:53px;height:30px;background:#eeeeee;border-color:#b9b9b9"><div class="t" style="left:-300px;right:-300px;text-align:center;transform-origin:50% 0;transform:scaleX(1.0);top:2.5px;line-height:12px;font-size:9px;color:#0f2b5b">-</div></div>
<div class="c" style="left:134px;top:794px;width:141px;height:30px;background:#eeeeee;border-color:#b9b9b9"><div class="t" style="left:-300px;right:-300px;text-align:center;transform-origin:50% 0;transform:scaleX(1.0);top:2.5px;line-height:12px;font-size:9px;color:#0f2b5b">-</div></div>
<div class="c" style="left:15px;top:794px;width:120px;height:30px;background:#eeeeee;border-color:#b9b9b9"></div>
<!-- energy bar -->
<div class="b" style="left:15px;top:655px;width:1289px;height:19px;background:#0096c8;color:#fff;font-weight:bold;direction:rtl;text-align:right;white-space:nowrap;padding-right:5px;line-height:19px;font-size:11px"><span class="sq" style="transform-origin:100% 50%;transform:scaleX(.7)">انرژی</span></div>
<!-- bottom description boxes -->
<div class="b" style="left:15px;top:845px;width:1289px;height:68px;border:1px solid #b9b9b9;background:#d2e4f5"></div>
<div class="b dsc" style="top:845px;height:18px"><span class="sq" style="transform-origin:100% 50%;transform:scaleX(.74)">کادر توضیحات در مورد اصلاحات</span></div>
<div class="b dsc" style="top:867px;height:18px"><span class="sq" style="transform-origin:100% 50%;transform:scaleX(.74)">کادر توضیحی مربوط به اطلاعات دوره ۱ ماهه منتهی به ۱۴۰۳/۰۲/۳۱</span></div>
<div class="b dsc" style="top:890px;height:18px"><span class="sq" style="transform-origin:100% 50%;transform:scaleX(.74)">کادر توضیحی مربوط اطلاعات تجمعی از ابتدای سال تا پایان مورخ ۱۴۰۳/۰۲/۳۱</span></div>

</body></html>
